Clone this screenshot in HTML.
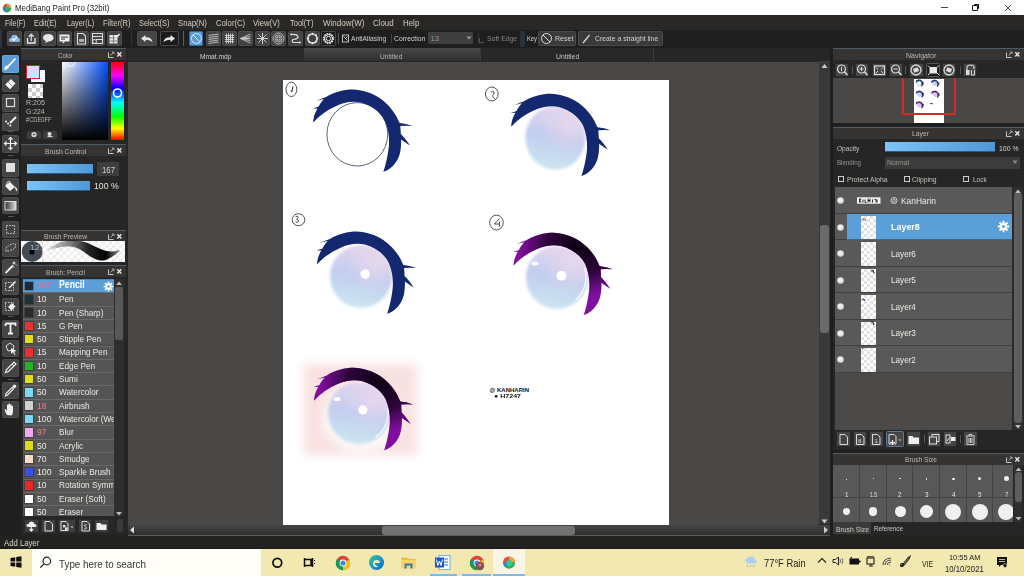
<!DOCTYPE html>
<html><head><meta charset="utf-8"><style>
*{margin:0;padding:0;box-sizing:border-box}
html,body{width:1024px;height:576px;overflow:hidden;background:#262626;font-family:"Liberation Sans",sans-serif;position:relative}
.a{position:absolute}
.t{position:absolute;white-space:nowrap;line-height:1;transform-origin:0 0}

</style></head><body>
<div class="a" style="left:0px;top:0px;width:1024px;height:15px;background:#fff"></div>
<svg class="a" style="left:2px;top:3px;" width="10" height="10" viewBox="0 0 10 10"><circle cx="5" cy="5" r="4.2" fill="#e84a3a"/><path d="M5 0.8 A4.2 4.2 0 0 1 9.2 5 L5 5Z" fill="#f0a030"/><path d="M9.2 5 A4.2 4.2 0 0 1 3 8.7 L5 5Z" fill="#1faa5a"/><path d="M3 8.7 A4.2 4.2 0 0 1 0.8 5 L5 5Z" fill="#2a7ad0"/><circle cx="5.3" cy="5.2" r="2.2" fill="#2bb56a"/></svg>
<div class="t" style="left:14.7px;top:5.10px;font-size:8.2px;color:#222;font-weight:400;font-family:'Liberation Sans',sans-serif;transform:scaleX(0.959);">MediBang Paint Pro (32bit)</div>
<div class="a" style="left:941px;top:7px;width:7px;height:1px;background:#444"></div>
<div class="a" style="left:972px;top:5.2px;width:5.6px;height:5.6px;border:1.2px solid #111;border-radius:1px"></div>
<div class="a" style="left:973.6px;top:4px;width:5.4px;height:5.4px;border-top:1px solid #111;border-right:1px solid #111;border-radius:1px"></div>
<svg class="a" style="left:1003.5px;top:3.5px;" width="8" height="8" viewBox="0 0 8 8"><path d="M1 1L7 7M7 1L1 7" stroke="#333" stroke-width=".9"/></svg>
<div class="a" style="left:0px;top:15px;width:1024px;height:15px;background:#292826"></div>
<div class="t" style="left:4.7px;top:19.00px;font-size:9px;color:#d4cdc2;font-weight:400;font-family:'Liberation Sans',sans-serif;transform:scaleX(0.788);">File(F)</div>
<div class="t" style="left:34.4px;top:19.00px;font-size:9px;color:#d4cdc2;font-weight:400;font-family:'Liberation Sans',sans-serif;transform:scaleX(0.821);">Edit(E)</div>
<div class="t" style="left:66.6px;top:19.00px;font-size:9px;color:#d4cdc2;font-weight:400;font-family:'Liberation Sans',sans-serif;transform:scaleX(0.809);">Layer(L)</div>
<div class="t" style="left:102.5px;top:19.00px;font-size:9px;color:#d4cdc2;font-weight:400;font-family:'Liberation Sans',sans-serif;transform:scaleX(0.846);">Filter(R)</div>
<div class="t" style="left:138.6px;top:19.00px;font-size:9px;color:#d4cdc2;font-weight:400;font-family:'Liberation Sans',sans-serif;transform:scaleX(0.821);">Select(S)</div>
<div class="t" style="left:178.4px;top:19.00px;font-size:9px;color:#d4cdc2;font-weight:400;font-family:'Liberation Sans',sans-serif;transform:scaleX(0.862);">Snap(N)</div>
<div class="t" style="left:215.6px;top:19.00px;font-size:9px;color:#d4cdc2;font-weight:400;font-family:'Liberation Sans',sans-serif;transform:scaleX(0.858);">Color(C)</div>
<div class="t" style="left:253.4px;top:19.00px;font-size:9px;color:#d4cdc2;font-weight:400;font-family:'Liberation Sans',sans-serif;transform:scaleX(0.858);">View(V)</div>
<div class="t" style="left:290.2px;top:19.00px;font-size:9px;color:#d4cdc2;font-weight:400;font-family:'Liberation Sans',sans-serif;transform:scaleX(0.835);">Tool(T)</div>
<div class="t" style="left:323px;top:19.00px;font-size:9px;color:#d4cdc2;font-weight:400;font-family:'Liberation Sans',sans-serif;transform:scaleX(0.890);">Window(W)</div>
<div class="t" style="left:373.4px;top:19.00px;font-size:9px;color:#d4cdc2;font-weight:400;font-family:'Liberation Sans',sans-serif;transform:scaleX(0.876);">Cloud</div>
<div class="t" style="left:402.7px;top:19.00px;font-size:9px;color:#d4cdc2;font-weight:400;font-family:'Liberation Sans',sans-serif;transform:scaleX(0.880);">Help</div>
<div class="a" style="left:0px;top:30px;width:1024px;height:18px;background:#1e1e1e"></div>
<div class="a" style="left:0px;top:30px;width:2px;height:18px;background:#2a3440"></div>
<div class="a" style="left:7px;top:31px;width:15px;height:15px;background:#434343;border:1px solid #4e4e4e;border-radius:1.5px"></div>
<svg class="a" style="left:7px;top:31px;" width="15" height="15" viewBox="0 0 15 15"><path d="M3.5 11 Q1.5 11 1.8 8.6 Q2.2 6.8 4 6.9 Q4.6 3.6 7.6 3.8 Q10.4 4 10.8 6.8 Q13.2 6.9 13.2 9 Q13.2 11 11 11Z" fill="#8bb6de"/><path d="M5 7.8L6.8 9.4L10 6" stroke="#f4f8ff" stroke-width="1.3" fill="none"/></svg>
<div class="a" style="left:24px;top:31px;width:15px;height:15px;background:#434343;border:1px solid #4e4e4e;border-radius:1.5px"></div>
<svg class="a" style="left:24px;top:31px;" width="15" height="15" viewBox="0 0 15 15"><path d="M3.5 7v5h7.5V7" stroke="#eee" stroke-width="1.3" fill="none"/><path d="M7.2 10V3.5M4.8 5.7L7.2 3.2L9.6 5.7" stroke="#ddd" stroke-width="1.3" fill="none"/></svg>
<div class="a" style="left:40.5px;top:31px;width:15px;height:15px;background:#434343;border:1px solid #4e4e4e;border-radius:1.5px"></div>
<svg class="a" style="left:40.5px;top:31px;" width="15" height="15" viewBox="0 0 15 15"><ellipse cx="7.3" cy="6.8" rx="5.3" ry="3.8" fill="#e6e6e6"/><path d="M5 9.5L4.3 12.5L7.5 10" fill="#e6e6e6"/></svg>
<div class="a" style="left:57px;top:31px;width:15px;height:15px;background:#434343;border:1px solid #4e4e4e;border-radius:1.5px"></div>
<svg class="a" style="left:57px;top:31px;" width="15" height="15" viewBox="0 0 15 15"><rect x="2.5" y="3.5" width="10" height="7" fill="#eee"/><path d="M5 10.5L6.5 12.5L8 10.5" fill="#eee"/><rect x="4" y="5.5" width="7" height="1.2" fill="#555"/><rect x="4" y="7.5" width="4" height="1.2" fill="#555"/></svg>
<div class="a" style="left:73.5px;top:31px;width:15px;height:15px;background:#434343;border:1px solid #4e4e4e;border-radius:1.5px"></div>
<svg class="a" style="left:73.5px;top:31px;" width="15" height="15" viewBox="0 0 15 15"><path d="M3.5 2.5h5.5l2.5 2.5v8h-8z" fill="none" stroke="#ddd" stroke-width="1.1"/><rect x="5" y="8" width="5" height="3" fill="#aaa"/></svg>
<div class="a" style="left:90px;top:31px;width:15px;height:15px;background:#434343;border:1px solid #4e4e4e;border-radius:1.5px"></div>
<svg class="a" style="left:90px;top:31px;" width="15" height="15" viewBox="0 0 15 15"><rect x="2.5" y="2.5" width="10" height="10" fill="none" stroke="#ddd" stroke-width="1"/><path d="M3 5.5h9M6 8.5h6" stroke="#ddd" stroke-width="1"/><circle cx="4.5" cy="10.5" r="2" fill="none" stroke="#ddd"/></svg>
<div class="a" style="left:106.5px;top:31px;width:15px;height:15px;background:#434343;border:1px solid #4e4e4e;border-radius:1.5px"></div>
<svg class="a" style="left:106.5px;top:31px;" width="15" height="15" viewBox="0 0 15 15"><rect x="2.5" y="4" width="8" height="8.5" fill="#e8e8e8"/><path d="M2.5 7h8M2.5 10h8M6.5 4v8.5" stroke="#666" stroke-width=".8"/><path d="M8 8L12.5 3" stroke="#eee" stroke-width="1.5"/></svg>
<div class="a" style="left:131px;top:31px;width:1px;height:15px;background:#333"></div>
<div class="a" style="left:137.4px;top:31px;width:19.6px;height:15px;background:#454545;border:1px solid #4e4e4e;border-radius:1.5px"></div>
<svg class="a" style="left:137.4px;top:31px;" width="20" height="15" viewBox="0 0 20 15"><path d="M4 7.5L8.5 4v2.2Q15 6 15.5 11.5Q13.5 8.8 8.5 8.8V11z" fill="#e8e8e8"/></svg>
<div class="a" style="left:159.7px;top:31px;width:19px;height:15px;background:#1c1c1c;border:1px solid #4a4a4a;border-radius:1.5px"></div>
<svg class="a" style="left:159.7px;top:31px;" width="19" height="15" viewBox="0 0 19 15"><path d="M15 7.5L10.5 4v2.2Q4 6 3.5 11.5Q5.5 8.8 10.5 8.8V11z" fill="#e8e8e8"/></svg>
<div class="a" style="left:183px;top:31px;width:1px;height:15px;background:#56606a"></div>
<div class="a" style="left:188.6px;top:31px;width:14.8px;height:15px;background:#5a9ad6;border:1px solid #3a6a9a;border-radius:1.5px"></div>
<svg class="a" style="left:188.6px;top:31px;" width="15" height="15" viewBox="0 0 15 15"><circle cx="7.4" cy="7.5" r="5" fill="none" stroke="#d8ecff" stroke-width="1"/><path d="M4 4L11 11" stroke="#d8ecff" stroke-width="1"/></svg>
<div class="a" style="left:205.8px;top:31px;width:15px;height:15px;background:#434343;border:1px solid #4e4e4e;border-radius:1.5px"></div>
<svg class="a" style="left:205.8px;top:31px;" width="15" height="15" viewBox="0 0 15 15"><path d="M2.5 4.5L12.5 3M2.5 6.5L12.5 5M2.5 8.5L12.5 7M2.5 10.5L12.5 9M2.5 12.5L12.5 11" stroke="#ccc" stroke-width=".9"/></svg>
<div class="a" style="left:222px;top:31px;width:15px;height:15px;background:#434343;border:1px solid #4e4e4e;border-radius:1.5px"></div>
<svg class="a" style="left:222px;top:31px;" width="15" height="15" viewBox="0 0 15 15"><path d="M4.5 2.5v10M6.5 2.5v10M8.5 2.5v10M10.5 2.5v10M3 4.5h9M3 6.5h9M3 8.5h9M3 10.5h9" stroke="#e4e4e4" stroke-width=".8"/></svg>
<div class="a" style="left:238px;top:31px;width:15px;height:15px;background:#434343;border:1px solid #4e4e4e;border-radius:1.5px"></div>
<svg class="a" style="left:238px;top:31px;" width="15" height="15" viewBox="0 0 15 15"><path d="M2.5 7.5L12.5 3M2.5 7.5L12.5 5.5M2.5 7.5L12.5 7.5M2.5 7.5L12.5 9.5M2.5 7.5L12.5 12" stroke="#ccc" stroke-width=".9"/></svg>
<div class="a" style="left:255px;top:31px;width:15px;height:15px;background:#434343;border:1px solid #4e4e4e;border-radius:1.5px"></div>
<svg class="a" style="left:255px;top:31px;" width="15" height="15" viewBox="0 0 15 15"><path d="M7.5 2v11M2 7.5h11M3.5 3.5l8 8M11.5 3.5l-8 8" stroke="#ddd" stroke-width=".9"/></svg>
<div class="a" style="left:271.4px;top:31px;width:15px;height:15px;background:#434343;border:1px solid #4e4e4e;border-radius:1.5px"></div>
<svg class="a" style="left:271.4px;top:31px;" width="15" height="15" viewBox="0 0 15 15"><circle cx="7.5" cy="7.5" r="5.5" fill="none" stroke="#ccc" stroke-width=".9"/><circle cx="7.5" cy="7.5" r="3.5" fill="none" stroke="#ccc" stroke-width=".9"/><rect x="6" y="6" width="3" height="3" fill="none" stroke="#ccc" stroke-width=".9"/></svg>
<div class="a" style="left:287.8px;top:31px;width:15px;height:15px;background:#434343;border:1px solid #4e4e4e;border-radius:1.5px"></div>
<svg class="a" style="left:287.8px;top:31px;" width="15" height="15" viewBox="0 0 15 15"><path d="M3.5 3.5Q9 3 10 5.5Q10.5 8 5 8.5Q3.5 9.5 5 11.5L11.5 11.5" stroke="#ddd" stroke-width="1.2" fill="none"/><circle cx="3.2" cy="3.5" r="1.1" fill="#ddd"/><circle cx="11.8" cy="11.5" r="1.1" fill="#ddd"/></svg>
<div class="a" style="left:304.5px;top:31px;width:15px;height:15px;background:#434343;border:1px solid #4e4e4e;border-radius:1.5px"></div>
<svg class="a" style="left:304.5px;top:31px;" width="15" height="15" viewBox="0 0 15 15"><circle cx="7.5" cy="7.5" r="4.6" fill="none" stroke="#eee" stroke-width="1.4"/><circle cx="12.10" cy="7.50" r="1.1" fill="#eee"/><circle cx="10.75" cy="10.75" r="1.1" fill="#eee"/><circle cx="7.50" cy="12.10" r="1.1" fill="#eee"/><circle cx="4.25" cy="10.75" r="1.1" fill="#eee"/><circle cx="2.90" cy="7.50" r="1.1" fill="#eee"/><circle cx="4.25" cy="4.25" r="1.1" fill="#eee"/><circle cx="7.50" cy="2.90" r="1.1" fill="#eee"/><circle cx="10.75" cy="4.25" r="1.1" fill="#eee"/></svg>
<div class="a" style="left:321.4px;top:31px;width:14.5px;height:15px;background:#1c1c1c;border:1px solid #4a4a4a;border-radius:1.5px"></div>
<svg class="a" style="left:321.4px;top:31px;" width="15" height="15" viewBox="0 0 15 15"><circle cx="7.5" cy="7.5" r="4.6" fill="none" stroke="#e0e0e0" stroke-width="2" stroke-dasharray="1.6 .8"/><circle cx="7.5" cy="7.5" r="4" fill="none" stroke="#e0e0e0" stroke-width=".9"/><circle cx="7.5" cy="7.5" r="2.2" fill="none" stroke="#e0e0e0" stroke-width="1"/></svg>
<div class="a" style="left:338.4px;top:33px;width:1px;height:11px;background:#555"></div>
<svg class="a" style="left:341.5px;top:34px;" width="7" height="9" viewBox="0 0 7 9"><rect x=".5" y="1" width="6" height="7" fill="none" stroke="#ccc" stroke-width=".9"/><path d="M1.5 2.5L5.5 6.5M5.5 2.5L3 5" stroke="#ccc" stroke-width=".9"/></svg>
<div class="t" style="left:351.1px;top:35.20px;font-size:8px;color:#d6d2ca;font-weight:400;font-family:'Liberation Sans',sans-serif;transform:scaleX(0.842);">AntiAliasing</div>
<div class="a" style="left:390.5px;top:34px;width:1px;height:9px;background:#444"></div>
<div class="t" style="left:394.1px;top:35.20px;font-size:8px;color:#d6d2ca;font-weight:400;font-family:'Liberation Sans',sans-serif;transform:scaleX(0.848);">Correction</div>
<div class="a" style="left:428px;top:32px;width:44.8px;height:12.4px;background:#3f3f3f;border-radius:1px"></div>
<div class="t" style="left:430.5px;top:35.00px;font-size:7.5px;color:#999;font-weight:400;font-family:'Liberation Sans',sans-serif;">13</div>
<svg class="a" style="left:466px;top:36px;" width="6" height="4" viewBox="0 0 6 4"><path d="M0.5 0.5h5L3 3.5z" fill="#999"/></svg>
<div class="a" style="left:477.5px;top:33px;width:1px;height:11px;background:#3a3a3a"></div>
<div class="a" style="left:479px;top:38px;width:5px;height:5px;border-left:1px solid #555;border-bottom:1px solid #555"></div>
<div class="t" style="left:487px;top:35.20px;font-size:8px;color:#8a8783;font-weight:400;font-family:'Liberation Sans',sans-serif;transform:scaleX(0.859);">Soft Edge</div>
<div class="a" style="left:520px;top:31px;width:5px;height:16px;background:#28323c"></div>
<div class="t" style="left:527px;top:35.20px;font-size:8px;color:#d6d2ca;font-weight:400;font-family:'Liberation Sans',sans-serif;transform:scaleX(0.725);">Key</div>
<div class="a" style="left:538.3px;top:31px;width:37.5px;height:15px;background:#3a3a3a;border:1px solid #4a4a4a;border-radius:1.5px"></div>
<svg class="a" style="left:540px;top:32px;" width="13" height="13" viewBox="0 0 13 13"><circle cx="6.5" cy="6.5" r="5" fill="none" stroke="#ddd" stroke-width="1"/><path d="M3 3L10 10" stroke="#ddd" stroke-width="1"/></svg>
<div class="t" style="left:554.5px;top:35.20px;font-size:8px;color:#d6d2ca;font-weight:400;font-family:'Liberation Sans',sans-serif;transform:scaleX(0.885);">Reset</div>
<div class="a" style="left:577.9px;top:31px;width:85.2px;height:15px;background:#3a3a3a;border:1px solid #4a4a4a;border-radius:1.5px"></div>
<svg class="a" style="left:580px;top:32px;" width="12" height="13" viewBox="0 0 12 13"><path d="M3 11L9.5 3" stroke="#ddd" stroke-width="1.2"/></svg>
<div class="t" style="left:594.6px;top:35.20px;font-size:8px;color:#d6d2ca;font-weight:400;font-family:'Liberation Sans',sans-serif;transform:scaleX(0.856);">Create a straight line</div>
<div class="a" style="left:0px;top:48px;width:21px;height:487px;background:#1f1f1f"></div>
<div class="a" style="left:2px;top:55.2px;width:17.4px;height:17.4px;background:#5b9bd5;border:1px solid #6aa6dc;border-radius:1.5px"></div>
<svg class="a" style="left:2px;top:55.2px;" width="17" height="17" viewBox="0 0 17 17"><path d="M5 12.5Q3.5 14.5 3.2 14Q4 11.5 5.5 11M6 11.5L13.5 3.5" stroke="#fff" stroke-width="1.8" fill="none"/><ellipse cx="4.6" cy="12.6" rx="2" ry="1.5" fill="#fff"/></svg>
<div class="a" style="left:2px;top:75px;width:17.4px;height:17.4px;background:#444;border:1px solid #4e4e4e;border-radius:1.5px"></div>
<svg class="a" style="left:2px;top:75px;" width="17" height="17" viewBox="0 0 17 17"><path d="M3.5 9.5L9 4L13.5 8.5L8 14z" fill="#f0f0f0"/><path d="M3.5 9.5L6 7L10.5 11.5L8 14z" fill="#fff"/><path d="M6 7L10.5 11.5" stroke="#555" stroke-width=".7"/></svg>
<div class="a" style="left:2px;top:94.2px;width:17.4px;height:17.4px;background:#444;border:1px solid #4e4e4e;border-radius:1.5px"></div>
<svg class="a" style="left:2px;top:94.2px;" width="17" height="17" viewBox="0 0 17 17"><rect x="4.5" y="4.5" width="8" height="8" fill="none" stroke="#ddd" stroke-width="1.2"/></svg>
<div class="a" style="left:2px;top:113.4px;width:17.4px;height:17.4px;background:#444;border:1px solid #4e4e4e;border-radius:1.5px"></div>
<svg class="a" style="left:2px;top:113.4px;" width="17" height="17" viewBox="0 0 17 17"><path d="M8 10L14 4" stroke="#eee" stroke-width="2"/><circle cx="4" cy="8.5" r="1" fill="#eee"/><circle cx="6" cy="10.5" r="1" fill="#eee"/><circle cx="8.3" cy="12.5" r="1" fill="#eee"/></svg>
<div class="a" style="left:8px;top:131px;width:6px;height:1px;background:#555"></div>
<div class="a" style="left:2px;top:135.2px;width:17.4px;height:17.4px;background:#444;border:1px solid #4e4e4e;border-radius:1.5px"></div>
<svg class="a" style="left:2px;top:135.2px;" width="17" height="17" viewBox="0 0 17 17"><path d="M8.5 2.5v12M2.5 8.5h12" stroke="#eee" stroke-width="1.2"/><path d="M6.5 4.5L8.5 2.5L10.5 4.5M6.5 12.5L8.5 14.5L10.5 12.5M4.5 6.5L2.5 8.5L4.5 10.5M12.5 6.5L14.5 8.5L12.5 10.5" stroke="#eee" stroke-width="1.2" fill="none"/></svg>
<div class="a" style="left:8px;top:155px;width:6px;height:1px;background:#555"></div>
<div class="a" style="left:2px;top:159.2px;width:17.4px;height:17.4px;background:#444;border:1px solid #4e4e4e;border-radius:1.5px"></div>
<svg class="a" style="left:2px;top:159.2px;" width="17" height="17" viewBox="0 0 17 17"><rect x="4" y="4" width="9" height="9" fill="#e0e0e0"/></svg>
<div class="a" style="left:2px;top:177.9px;width:17.4px;height:17.4px;background:#444;border:1px solid #4e4e4e;border-radius:1.5px"></div>
<svg class="a" style="left:2px;top:177.9px;" width="17" height="17" viewBox="0 0 17 17"><path d="M3 8L8 4L13 9L8 13z" fill="#f0f0f0"/><path d="M4 7.5Q5 2.5 8 3.5" stroke="#ddd" fill="none"/><path d="M13 9Q15 11 14.5 13" stroke="#ddd" stroke-width="1.5" fill="none"/></svg>
<svg class="a" style="left:2px;top:196.7px" width="17" height="17"><defs><linearGradient id="tg" x1="0" x2="1"><stop offset="0" stop-color="#333"/><stop offset="1" stop-color="#ddd"/></linearGradient></defs></svg>
<div class="a" style="left:2px;top:196.7px;width:17.4px;height:17.4px;background:#444;border:1px solid #4e4e4e;border-radius:1.5px"></div>
<svg class="a" style="left:2px;top:196.7px;" width="17" height="17" viewBox="0 0 17 17"><rect x="3" y="4.5" width="11" height="8.5" fill="url(#tg)" stroke="#ddd" stroke-width="1"/></svg>
<div class="a" style="left:8px;top:216px;width:6px;height:1px;background:#555"></div>
<div class="a" style="left:2px;top:220.6px;width:17.4px;height:17.4px;background:#444;border:1px solid #4e4e4e;border-radius:1.5px"></div>
<svg class="a" style="left:2px;top:220.6px;" width="17" height="17" viewBox="0 0 17 17"><rect x="4.5" y="4.5" width="8" height="8" fill="none" stroke="#ccc" stroke-width="1.1" stroke-dasharray="1.5 1.2"/></svg>
<div class="a" style="left:2px;top:239.4px;width:17.4px;height:17.4px;background:#444;border:1px solid #4e4e4e;border-radius:1.5px"></div>
<svg class="a" style="left:2px;top:239.4px;" width="17" height="17" viewBox="0 0 17 17"><path d="M4 12Q3 8 8 6Q13 3 13.5 6Q14 10 8 11.5Q5 12.5 4 12z" fill="none" stroke="#ccc" stroke-width="1.1" stroke-dasharray="1.4 1.2"/></svg>
<div class="a" style="left:2px;top:258.75px;width:17.4px;height:17.4px;background:#444;border:1px solid #4e4e4e;border-radius:1.5px"></div>
<svg class="a" style="left:2px;top:258.75px;" width="17" height="17" viewBox="0 0 17 17"><path d="M3.5 14L11 6.5" stroke="#eee" stroke-width="1.8"/><path d="M12 2.5v3M10.5 4h3M14 5.5l1 1M12 7.5v1" stroke="#eee" stroke-width="1"/></svg>
<div class="a" style="left:2px;top:278px;width:17.4px;height:17.4px;background:#444;border:1px solid #4e4e4e;border-radius:1.5px"></div>
<svg class="a" style="left:2px;top:278px;" width="17" height="17" viewBox="0 0 17 17"><rect x="3.5" y="4.5" width="8" height="8" fill="none" stroke="#ccc" stroke-width="1" stroke-dasharray="1.4 1.1"/><path d="M7 10L13.5 3.5" stroke="#eee" stroke-width="1.6"/></svg>
<div class="a" style="left:2px;top:297.5px;width:17.4px;height:17.4px;background:#444;border:1px solid #4e4e4e;border-radius:1.5px"></div>
<svg class="a" style="left:2px;top:297.5px;" width="17" height="17" viewBox="0 0 17 17"><rect x="3.5" y="4.5" width="8" height="8" fill="none" stroke="#ccc" stroke-width="1" stroke-dasharray="1.4 1.1"/><path d="M6 9L10 5L13.5 8.5L9.5 12.5z" fill="#eee"/></svg>
<div class="a" style="left:8px;top:316px;width:6px;height:1px;background:#555"></div>
<div class="a" style="left:2px;top:320.3px;width:17.4px;height:17.4px;background:#444;border:1px solid #4e4e4e;border-radius:1.5px"></div>
<svg class="a" style="left:2px;top:320.3px;" width="17" height="17" viewBox="0 0 17 17"><path d="M3.5 3.5h10v2.5M3.5 3.5v2.5M8.5 3.5v10M6 13.5h5" stroke="#f2f2f2" stroke-width="1.8" fill="none"/></svg>
<div class="a" style="left:2px;top:340px;width:17.4px;height:17.4px;background:#444;border:1px solid #4e4e4e;border-radius:1.5px"></div>
<svg class="a" style="left:2px;top:340px;" width="17" height="17" viewBox="0 0 17 17"><path d="M4 6L8 3L12 6L11 10L6 11z" fill="none" stroke="#ddd" stroke-width="1"/><path d="M9 8L14.5 11L12 11.8L13.5 14.5L12.5 15L11 12.3L9 14z" fill="#eee"/></svg>
<div class="a" style="left:2px;top:359.4px;width:17.4px;height:17.4px;background:#444;border:1px solid #4e4e4e;border-radius:1.5px"></div>
<svg class="a" style="left:2px;top:359.4px;" width="17" height="17" viewBox="0 0 17 17"><path d="M3.5 13.5L4.5 10.5L12 3L14 5L6.5 12.5z" fill="none" stroke="#eee" stroke-width="1.2"/><path d="M10 5L12 7" stroke="#eee"/></svg>
<div class="a" style="left:8px;top:378.5px;width:6px;height:1px;background:#555"></div>
<div class="a" style="left:2px;top:381.9px;width:17.4px;height:17.4px;background:#444;border:1px solid #4e4e4e;border-radius:1.5px"></div>
<svg class="a" style="left:2px;top:381.9px;" width="17" height="17" viewBox="0 0 17 17"><path d="M3.5 14L4 11.5L10 5.5L11.5 7L5.5 13z" fill="none" stroke="#eee" stroke-width="1.1"/><path d="M10 4.5L12 2.5Q14 2.5 14.5 4.5L12.5 6.5z" fill="#eee"/></svg>
<div class="a" style="left:2px;top:401px;width:17.4px;height:17.4px;background:#444;border:1px solid #4e4e4e;border-radius:1.5px"></div>
<svg class="a" style="left:2px;top:401px;" width="17" height="17" viewBox="0 0 17 17"><path d="M5 14Q3 11 2.5 8.5Q3 7.5 4 8.5L5 10V4Q5.5 3 6.5 4V8V2.8Q7.3 2 8 3V8V3.5Q8.8 2.8 9.5 3.7V8.5V5Q10.3 4.3 11 5.2V10Q11 13 9.5 14.5z" fill="#f0f0f0"/></svg>
<div class="a" style="left:21px;top:48px;width:105px;height:12px;background:#353433;border-top:1px solid #4e5c68"></div>
<div class="t" style="left:57.7px;top:51.50px;font-size:8px;color:#bdb8b0;font-weight:400;font-family:'Liberation Sans',sans-serif;transform:scaleX(0.763);">Color</div>
<svg class="a" style="left:107px;top:51px;" width="18" height="8" viewBox="0 0 18 8"><path d="M1.5 1.5v5h5" stroke="#c8c8c8" stroke-width="1" fill="none"/><path d="M3.5 4.5L6.5 1.5M4.8 1h2.2v2.2" stroke="#c8c8c8" stroke-width=".8" fill="none"/><path d="M10.3 1.2L14.3 5.6M14.3 1.2L10.3 5.6" stroke="#e0e0e0" stroke-width="1.5"/></svg>
<div class="a" style="left:21px;top:61px;width:105px;height:83px;background:#262626"></div>
<div class="a" style="left:31.2px;top:70px;width:13.8px;height:12.3px;background:#fff"></div>
<div class="a" style="left:26px;top:65px;width:13.9px;height:13.8px;background:#cde0ff;border:1.3px solid #e02020"></div>
<div class="a" style="left:27.7px;top:84px;width:15.3px;height:13.9px;background-color:#fff;background-image:linear-gradient(45deg,#ccc 25%,transparent 25%,transparent 75%,#ccc 75%),linear-gradient(45deg,#ccc 25%,transparent 25%,transparent 75%,#ccc 75%);background-size:8px 8px;background-position:0 0,4px 4px"></div>
<div class="t" style="left:25.7px;top:99.20px;font-size:7px;color:#bdb8b0;font-weight:400;font-family:'Liberation Sans',sans-serif;transform:scaleX(1.017);">R:205</div>
<div class="t" style="left:25.7px;top:107.50px;font-size:7px;color:#bdb8b0;font-weight:400;font-family:'Liberation Sans',sans-serif;transform:scaleX(0.970);">G:224</div>
<div class="t" style="left:25.7px;top:116.20px;font-size:7px;color:#bdb8b0;font-weight:400;font-family:'Liberation Sans',sans-serif;transform:scaleX(0.819);">#CDE0FF</div>
<div class="a" style="left:26.9px;top:130.8px;width:13.8px;height:7.8px;background:#3c3c3c;border-radius:1px"></div>
<div class="a" style="left:42.5px;top:130.8px;width:14.7px;height:7.8px;background:#3c3c3c;border-radius:1px"></div>
<svg class="a" style="left:30px;top:131px;" width="8" height="7" viewBox="0 0 8 7"><circle cx="4" cy="3.5" r="2.6" fill="#ddd"/><path d="M2.5 3.5h3M4 2v3" stroke="#555" stroke-width=".7"/></svg>
<svg class="a" style="left:46px;top:131px;" width="8" height="7" viewBox="0 0 8 7"><circle cx="3.5" cy="3" r="2" fill="#ddd"/><path d="M1.5 5.5h5" stroke="#ddd" stroke-width="1.2"/></svg>
<div class="a" style="left:61.9px;top:61.8px;width:46px;height:78.2px;background:linear-gradient(to bottom,rgba(0,0,0,0),#000),linear-gradient(to right,#fff,#0050ff)"></div>
<svg class="a" style="left:61.9px;top:61.8px;" width="20" height="8" viewBox="0 0 20 8"><circle cx="9" cy="0.8" r="3.6" fill="none" stroke="#eee" stroke-width="1.2"/></svg>
<div class="a" style="left:110.7px;top:61.8px;width:13.6px;height:78.2px;background:linear-gradient(to bottom,#ff0000 0%,#ff00ff 17%,#0000ff 34%,#00ffff 52%,#00ff00 70%,#ffff00 85%,#ff0000 100%)"></div>
<svg class="a" style="left:111px;top:87px;" width="13" height="12" viewBox="0 0 13 12"><circle cx="6.5" cy="6" r="4" fill="none" stroke="#fff" stroke-width="1.6"/></svg>
<div class="a" style="left:21px;top:144px;width:105px;height:12px;background:#353433;border-top:1px solid #4e5c68"></div>
<div class="t" style="left:44.8px;top:147.50px;font-size:8px;color:#bdb8b0;font-weight:400;font-family:'Liberation Sans',sans-serif;transform:scaleX(0.846);">Brush Control</div>
<svg class="a" style="left:107px;top:147px;" width="18" height="8" viewBox="0 0 18 8"><path d="M1.5 1.5v5h5" stroke="#c8c8c8" stroke-width="1" fill="none"/><path d="M3.5 4.5L6.5 1.5M4.8 1h2.2v2.2" stroke="#c8c8c8" stroke-width=".8" fill="none"/><path d="M10.3 1.2L14.3 5.6M14.3 1.2L10.3 5.6" stroke="#e0e0e0" stroke-width="1.5"/></svg>
<div class="a" style="left:21px;top:156.5px;width:105px;height:73px;background:#262626"></div>
<div class="a" style="left:27.3px;top:163.8px;width:65.4px;height:10.2px;background:linear-gradient(to right,#7cc4f6,#4d98d8);border-bottom:1px solid #2a5a88"></div>
<div class="a" style="left:97px;top:162.2px;width:22px;height:14px;background:#3e3e3e"></div>
<div class="t" style="left:102px;top:165.50px;font-size:9px;color:#d8d4cc;font-weight:400;font-family:'Liberation Sans',sans-serif;transform:scaleX(0.865);">167</div>
<div class="a" style="left:27.3px;top:180.5px;width:62.7px;height:10.5px;background:linear-gradient(to right,#7cc4f6,#4d98d8);border-bottom:1px solid #2a5a88"></div>
<div class="t" style="left:94.3px;top:181.70px;font-size:9px;color:#e8e4dc;font-weight:400;font-family:'Liberation Sans',sans-serif;transform:scaleX(0.967);">100 %</div>
<div class="a" style="left:21px;top:229.7px;width:105px;height:12px;background:#353433;border-top:1px solid #4e5c68"></div>
<div class="t" style="left:43.6px;top:233.20px;font-size:8px;color:#bdb8b0;font-weight:400;font-family:'Liberation Sans',sans-serif;transform:scaleX(0.834);">Brush Preview</div>
<svg class="a" style="left:107px;top:232.7px;" width="18" height="8" viewBox="0 0 18 8"><path d="M1.5 1.5v5h5" stroke="#c8c8c8" stroke-width="1" fill="none"/><path d="M3.5 4.5L6.5 1.5M4.8 1h2.2v2.2" stroke="#c8c8c8" stroke-width=".8" fill="none"/><path d="M10.3 1.2L14.3 5.6M14.3 1.2L10.3 5.6" stroke="#e0e0e0" stroke-width="1.5"/></svg>
<div class="a" style="left:21.4px;top:240.8px;width:103.5px;height:21.2px;background-color:#fff;background-image:linear-gradient(45deg,#ececec 25%,transparent 25%,transparent 75%,#ececec 75%),linear-gradient(45deg,#ececec 25%,transparent 25%,transparent 75%,#ececec 75%);background-size:7px 7px;background-position:0 0,3.5px 3.5px"></div>
<svg class="a" style="left:21px;top:240px;" width="104" height="22" viewBox="0 0 104 22"><defs><linearGradient id="bp" gradientUnits="userSpaceOnUse" x1="25" y1="0" x2="100" y2="0"><stop offset="0" stop-color="#000" stop-opacity=".12"/><stop offset=".3" stop-color="#000" stop-opacity=".45"/><stop offset=".55" stop-color="#000" stop-opacity=".85"/><stop offset=".8" stop-color="#000" stop-opacity="1"/><stop offset="1" stop-color="#000" stop-opacity=".35"/></linearGradient></defs><path d="M25.9 10.5 C31 6 37 2 45 1 C53 0 61 .5 69 4 C77 8 85 12 92 11.5 C96 11 98 10 99.5 10 C97 13 91 18 83 20.5 C75 21 69 16.5 63 12 C57 7.5 51 6 45 6.5 C37 7 31 9 25.9 10.5 Z" fill="url(#bp)"/></svg>
<svg class="a" style="left:21px;top:240px;" width="24" height="23" viewBox="0 0 24 23"><circle cx="11.2" cy="11.5" r="10.4" fill="#444a52"/><circle cx="10.9" cy="12" r="2.6" fill="#000"/><path d="M21.5 0v22" stroke="#ccc" stroke-width=".6"/></svg>
<div class="t" style="left:29.8px;top:244.50px;font-size:6.5px;color:#a8b8c8;font-weight:400;font-family:'Liberation Sans',sans-serif;transform:scaleX(1.326);">12.</div>
<div class="a" style="left:21px;top:265px;width:105px;height:12px;background:#353433;border-top:1px solid #4e5c68"></div>
<div class="t" style="left:45.7px;top:268.50px;font-size:8px;color:#bdb8b0;font-weight:400;font-family:'Liberation Sans',sans-serif;transform:scaleX(0.825);">Brush: Pencil</div>
<svg class="a" style="left:107px;top:268px;" width="18" height="8" viewBox="0 0 18 8"><path d="M1.5 1.5v5h5" stroke="#c8c8c8" stroke-width="1" fill="none"/><path d="M3.5 4.5L6.5 1.5M4.8 1h2.2v2.2" stroke="#c8c8c8" stroke-width=".8" fill="none"/><path d="M10.3 1.2L14.3 5.6M14.3 1.2L10.3 5.6" stroke="#e0e0e0" stroke-width="1.5"/></svg>
<div class="a" style="left:21px;top:277px;width:105px;height:258px;background:#262626"></div>
<div class="a" style="left:22.5px;top:279px;width:91.2px;height:237.3px;background:#4a4a4a"></div>
<div class="a" style="left:22.5px;top:279px;width:91.2px;height:237.3px;overflow:hidden">
<div class="a" style="left:0;top:0.00px;width:91.2px;height:13.3px;background:#5a9fd8;border-top:1px solid #4a8ac0"></div>
<div class="a" style="left:2.2px;top:2.70px;width:8.5px;height:8.6px;background:#1d2a3a;box-shadow:0 0 0 .6px rgba(0,0,0,.35)"></div>

<div class="a" style="left:0;top:13.30px;width:91.2px;height:13.3px;background:#555;border-top:1px solid #6a6a6a"></div>
<div class="a" style="left:2.2px;top:16.00px;width:8.5px;height:8.6px;background:#22303a;box-shadow:0 0 0 .6px rgba(0,0,0,.35)"></div>

<div class="a" style="left:0;top:26.60px;width:91.2px;height:13.3px;background:#555;border-top:1px solid #6a6a6a"></div>
<div class="a" style="left:2.2px;top:29.30px;width:8.5px;height:8.6px;background:#2a2a2a;box-shadow:0 0 0 .6px rgba(0,0,0,.35)"></div>

<div class="a" style="left:0;top:39.90px;width:91.2px;height:13.3px;background:#555;border-top:1px solid #6a6a6a"></div>
<div class="a" style="left:2.2px;top:42.60px;width:8.5px;height:8.6px;background:#e83232;box-shadow:0 0 0 .6px rgba(0,0,0,.35)"></div>

<div class="a" style="left:0;top:53.20px;width:91.2px;height:13.3px;background:#555;border-top:1px solid #6a6a6a"></div>
<div class="a" style="left:2.2px;top:55.90px;width:8.5px;height:8.6px;background:#e6dc1e;box-shadow:0 0 0 .6px rgba(0,0,0,.35)"></div>

<div class="a" style="left:0;top:66.50px;width:91.2px;height:13.3px;background:#555;border-top:1px solid #6a6a6a"></div>
<div class="a" style="left:2.2px;top:69.20px;width:8.5px;height:8.6px;background:#e83232;box-shadow:0 0 0 .6px rgba(0,0,0,.35)"></div>

<div class="a" style="left:0;top:79.80px;width:91.2px;height:13.3px;background:#555;border-top:1px solid #6a6a6a"></div>
<div class="a" style="left:2.2px;top:82.50px;width:8.5px;height:8.6px;background:#22b422;box-shadow:0 0 0 .6px rgba(0,0,0,.35)"></div>

<div class="a" style="left:0;top:93.10px;width:91.2px;height:13.3px;background:#555;border-top:1px solid #6a6a6a"></div>
<div class="a" style="left:2.2px;top:95.80px;width:8.5px;height:8.6px;background:#e6dc1e;box-shadow:0 0 0 .6px rgba(0,0,0,.35)"></div>

<div class="a" style="left:0;top:106.40px;width:91.2px;height:13.3px;background:#555;border-top:1px solid #6a6a6a"></div>
<div class="a" style="left:2.2px;top:109.10px;width:8.5px;height:8.6px;background:#7ad8f8;box-shadow:0 0 0 .6px rgba(0,0,0,.35)"></div>

<div class="a" style="left:0;top:119.70px;width:91.2px;height:13.3px;background:#555;border-top:1px solid #6a6a6a"></div>
<div class="a" style="left:2.2px;top:122.40px;width:8.5px;height:8.6px;background:#cfcfcf;box-shadow:0 0 0 .6px rgba(0,0,0,.35)"></div>

<div class="a" style="left:0;top:133.00px;width:91.2px;height:13.3px;background:#555;border-top:1px solid #6a6a6a"></div>
<div class="a" style="left:2.2px;top:135.70px;width:8.5px;height:8.6px;background:#7ad8f8;box-shadow:0 0 0 .6px rgba(0,0,0,.35)"></div>

<div class="a" style="left:0;top:146.30px;width:91.2px;height:13.3px;background:#555;border-top:1px solid #6a6a6a"></div>
<div class="a" style="left:2.2px;top:149.00px;width:8.5px;height:8.6px;background:#f4a6f4;box-shadow:0 0 0 .6px rgba(0,0,0,.35)"></div>

<div class="a" style="left:0;top:159.60px;width:91.2px;height:13.3px;background:#555;border-top:1px solid #6a6a6a"></div>
<div class="a" style="left:2.2px;top:162.30px;width:8.5px;height:8.6px;background:#e0d81a;box-shadow:0 0 0 .6px rgba(0,0,0,.35)"></div>

<div class="a" style="left:0;top:172.90px;width:91.2px;height:13.3px;background:#555;border-top:1px solid #6a6a6a"></div>
<div class="a" style="left:2.2px;top:175.60px;width:8.5px;height:8.6px;background:#f8dcc4;box-shadow:0 0 0 .6px rgba(0,0,0,.35)"></div>

<div class="a" style="left:0;top:186.20px;width:91.2px;height:13.3px;background:#555;border-top:1px solid #6a6a6a"></div>
<div class="a" style="left:2.2px;top:188.90px;width:8.5px;height:8.6px;background:#3a4ef2;box-shadow:0 0 0 .6px rgba(0,0,0,.35)"></div>

<div class="a" style="left:0;top:199.50px;width:91.2px;height:13.3px;background:#555;border-top:1px solid #6a6a6a"></div>
<div class="a" style="left:2.2px;top:202.20px;width:8.5px;height:8.6px;background:#e82828;box-shadow:0 0 0 .6px rgba(0,0,0,.35)"></div>

<div class="a" style="left:0;top:212.80px;width:91.2px;height:13.3px;background:#555;border-top:1px solid #6a6a6a"></div>
<div class="a" style="left:2.2px;top:215.50px;width:8.5px;height:8.6px;background:#ffffff;box-shadow:0 0 0 .6px rgba(0,0,0,.35)"></div>

<div class="a" style="left:0;top:226.10px;width:91.2px;height:13.3px;background:#555;border-top:1px solid #6a6a6a"></div>
<div class="a" style="left:2.2px;top:228.80px;width:8.5px;height:8.6px;background:#ffffff;box-shadow:0 0 0 .6px rgba(0,0,0,.35)"></div>

</div>
<div class="a" style="left:0;top:0;width:113.7px;height:516.3px;overflow:hidden">
<div class="t" style="left:36.6px;top:279.90px;font-size:9.8px;color:#e86a98;font-weight:700;font-family:'Liberation Sans',sans-serif;transform:scaleX(0.886);">167</div>
<div class="t" style="left:58.6px;top:279.90px;font-size:10px;color:#fff;font-weight:700;font-family:'Liberation Sans',sans-serif;transform:scaleX(0.869);">Pencil</div>
<div class="t" style="left:36.6px;top:294.20px;font-size:9.8px;color:#f0ece4;font-weight:400;font-family:'Liberation Sans',sans-serif;transform:scaleX(0.871);">10</div>
<div class="t" style="left:58.5px;top:294.20px;font-size:9.8px;color:#ecE8e0;font-weight:400;font-family:'Liberation Sans',sans-serif;transform:scaleX(.84)">Pen</div>
<div class="t" style="left:36.6px;top:307.50px;font-size:9.8px;color:#f0ece4;font-weight:400;font-family:'Liberation Sans',sans-serif;transform:scaleX(0.871);">10</div>
<div class="t" style="left:58.5px;top:307.50px;font-size:9.8px;color:#ecE8e0;font-weight:400;font-family:'Liberation Sans',sans-serif;transform:scaleX(.84)">Pen (Sharp)</div>
<div class="t" style="left:36.6px;top:320.80px;font-size:9.8px;color:#f0ece4;font-weight:400;font-family:'Liberation Sans',sans-serif;transform:scaleX(0.871);">15</div>
<div class="t" style="left:58.5px;top:320.80px;font-size:9.8px;color:#ecE8e0;font-weight:400;font-family:'Liberation Sans',sans-serif;transform:scaleX(.84)">G Pen</div>
<div class="t" style="left:36.6px;top:334.10px;font-size:9.8px;color:#f0ece4;font-weight:400;font-family:'Liberation Sans',sans-serif;transform:scaleX(0.871);">50</div>
<div class="t" style="left:58.5px;top:334.10px;font-size:9.8px;color:#ecE8e0;font-weight:400;font-family:'Liberation Sans',sans-serif;transform:scaleX(.84)">Stipple Pen</div>
<div class="t" style="left:36.6px;top:347.40px;font-size:9.8px;color:#f0ece4;font-weight:400;font-family:'Liberation Sans',sans-serif;transform:scaleX(0.871);">15</div>
<div class="t" style="left:58.5px;top:347.40px;font-size:9.8px;color:#ecE8e0;font-weight:400;font-family:'Liberation Sans',sans-serif;transform:scaleX(.84)">Mapping Pen</div>
<div class="t" style="left:36.6px;top:360.70px;font-size:9.8px;color:#f0ece4;font-weight:400;font-family:'Liberation Sans',sans-serif;transform:scaleX(0.871);">10</div>
<div class="t" style="left:58.5px;top:360.70px;font-size:9.8px;color:#ecE8e0;font-weight:400;font-family:'Liberation Sans',sans-serif;transform:scaleX(.84)">Edge Pen</div>
<div class="t" style="left:36.6px;top:374.00px;font-size:9.8px;color:#f0ece4;font-weight:400;font-family:'Liberation Sans',sans-serif;transform:scaleX(0.871);">50</div>
<div class="t" style="left:58.5px;top:374.00px;font-size:9.8px;color:#ecE8e0;font-weight:400;font-family:'Liberation Sans',sans-serif;transform:scaleX(.84)">Sumi</div>
<div class="t" style="left:36.6px;top:387.30px;font-size:9.8px;color:#f0ece4;font-weight:400;font-family:'Liberation Sans',sans-serif;transform:scaleX(0.871);">50</div>
<div class="t" style="left:58.5px;top:387.30px;font-size:9.8px;color:#ecE8e0;font-weight:400;font-family:'Liberation Sans',sans-serif;transform:scaleX(.84)">Watercolor</div>
<div class="t" style="left:36.6px;top:400.60px;font-size:9.8px;color:#f07a8a;font-weight:400;font-family:'Liberation Sans',sans-serif;transform:scaleX(0.871);">18</div>
<div class="t" style="left:58.5px;top:400.60px;font-size:9.8px;color:#ecE8e0;font-weight:400;font-family:'Liberation Sans',sans-serif;transform:scaleX(.84)">Airbrush</div>
<div class="t" style="left:36.6px;top:413.90px;font-size:9.8px;color:#f0ece4;font-weight:400;font-family:'Liberation Sans',sans-serif;transform:scaleX(0.886);">100</div>
<div class="t" style="left:58.5px;top:413.90px;font-size:9.8px;color:#ecE8e0;font-weight:400;font-family:'Liberation Sans',sans-serif;transform:scaleX(.84)">Watercolor (Wet)</div>
<div class="t" style="left:36.6px;top:427.20px;font-size:9.8px;color:#f07a8a;font-weight:400;font-family:'Liberation Sans',sans-serif;transform:scaleX(0.871);">97</div>
<div class="t" style="left:58.5px;top:427.20px;font-size:9.8px;color:#ecE8e0;font-weight:400;font-family:'Liberation Sans',sans-serif;transform:scaleX(.84)">Blur</div>
<div class="t" style="left:36.6px;top:440.50px;font-size:9.8px;color:#f0ece4;font-weight:400;font-family:'Liberation Sans',sans-serif;transform:scaleX(0.871);">50</div>
<div class="t" style="left:58.5px;top:440.50px;font-size:9.8px;color:#ecE8e0;font-weight:400;font-family:'Liberation Sans',sans-serif;transform:scaleX(.84)">Acrylic</div>
<div class="t" style="left:36.6px;top:453.80px;font-size:9.8px;color:#f0ece4;font-weight:400;font-family:'Liberation Sans',sans-serif;transform:scaleX(0.871);">70</div>
<div class="t" style="left:58.5px;top:453.80px;font-size:9.8px;color:#ecE8e0;font-weight:400;font-family:'Liberation Sans',sans-serif;transform:scaleX(.84)">Smudge</div>
<div class="t" style="left:36.6px;top:467.10px;font-size:9.8px;color:#f0ece4;font-weight:400;font-family:'Liberation Sans',sans-serif;transform:scaleX(0.886);">100</div>
<div class="t" style="left:58.5px;top:467.10px;font-size:9.8px;color:#ecE8e0;font-weight:400;font-family:'Liberation Sans',sans-serif;transform:scaleX(.84)">Sparkle Brush</div>
<div class="t" style="left:36.6px;top:480.40px;font-size:9.8px;color:#f0ece4;font-weight:400;font-family:'Liberation Sans',sans-serif;transform:scaleX(0.871);">10</div>
<div class="t" style="left:58.5px;top:480.40px;font-size:9.8px;color:#ecE8e0;font-weight:400;font-family:'Liberation Sans',sans-serif;transform:scaleX(.84)">Rotation Symmetry</div>
<div class="t" style="left:36.6px;top:493.70px;font-size:9.8px;color:#f0ece4;font-weight:400;font-family:'Liberation Sans',sans-serif;transform:scaleX(0.871);">50</div>
<div class="t" style="left:58.5px;top:493.70px;font-size:9.8px;color:#ecE8e0;font-weight:400;font-family:'Liberation Sans',sans-serif;transform:scaleX(.84)">Eraser (Soft)</div>
<div class="t" style="left:36.6px;top:507.00px;font-size:9.8px;color:#f0ece4;font-weight:400;font-family:'Liberation Sans',sans-serif;transform:scaleX(0.871);">50</div>
<div class="t" style="left:58.5px;top:507.00px;font-size:9.8px;color:#ecE8e0;font-weight:400;font-family:'Liberation Sans',sans-serif;transform:scaleX(.84)">Eraser</div>
</div>
<svg class="a" style="left:102.5px;top:280.5px;" width="11" height="11" viewBox="0 0 11 11"><circle cx="5.5" cy="5.5" r="3" fill="#fff"/><path d="M5.5 .5v10M.5 5.5h10M2 2l7 7M9 2l-7 7" stroke="#fff" stroke-width="1.6"/><circle cx="5.5" cy="5.5" r="1.3" fill="#5a9fd8"/></svg>
<div class="a" style="left:114px;top:279px;width:10px;height:237px;background:#2e2e2e"></div>
<svg class="a" style="left:114px;top:280px;" width="10" height="6" viewBox="0 0 10 6"><path d="M2 5L5 1.5L8 5z" fill="#bbb"/></svg>
<div class="a" style="left:115px;top:287px;width:8px;height:53px;background:#585858;border-radius:2px"></div>
<svg class="a" style="left:114px;top:511px;" width="10" height="6" viewBox="0 0 10 6"><path d="M2 1L5 4.5L8 1z" fill="#bbb"/></svg>
<div class="a" style="left:24px;top:518.5px;width:14.799999999999997px;height:14.2px;background:#3e3e3e;border:1px solid #2a2a2a;border-radius:1.5px"></div>
<div class="a" style="left:41px;top:518.5px;width:14.700000000000003px;height:14.2px;background:#3e3e3e;border:1px solid #2a2a2a;border-radius:1.5px"></div>
<div class="a" style="left:58px;top:518.5px;width:18px;height:14.2px;background:#3e3e3e;border:1px solid #2a2a2a;border-radius:1.5px"></div>
<div class="a" style="left:78px;top:518.5px;width:14.400000000000006px;height:14.2px;background:#3e3e3e;border:1px solid #2a2a2a;border-radius:1.5px"></div>
<div class="a" style="left:94.4px;top:518.5px;width:15.0px;height:14.2px;background:#3e3e3e;border:1px solid #2a2a2a;border-radius:1.5px"></div>
<div class="a" style="left:117px;top:519px;width:6px;height:13px;background:#3a3a3a;border-radius:2px"></div>
<svg class="a" style="left:24px;top:518.5px;" width="15" height="14" viewBox="0 0 15 14"><path d="M4 8Q2 8 2.5 6Q3 4.8 4.5 5Q5 2.5 7.5 2.5Q10 2.5 10.5 5Q12.5 5 12.5 7Q12.5 8 11 8z" fill="#eee"/><path d="M7.3 6v6M5.5 10L7.3 12L9 10" stroke="#eee" stroke-width="1.2" fill="none"/></svg>
<svg class="a" style="left:41px;top:518.5px;" width="15" height="14" viewBox="0 0 15 14"><path d="M4 2.5h5l2.5 2.5v7h-7.5z" fill="none" stroke="#ddd" stroke-width="1"/></svg>
<svg class="a" style="left:58px;top:518.5px;" width="18" height="14" viewBox="0 0 18 14"><path d="M3 2.5h5l2 2v7h-7z" fill="none" stroke="#ddd" stroke-width="1"/><rect x="5" y="6" width="2.5" height="2.5" fill="#ddd"/><rect x="7" y="8.5" width="2.5" height="2.5" fill="#ddd"/><path d="M12.5 7.5h3L14 9z" fill="#ddd"/></svg>
<svg class="a" style="left:78px;top:518.5px;" width="15" height="14" viewBox="0 0 15 14"><path d="M4 2.5h5l2.5 2.5v7h-7.5z" fill="none" stroke="#ddd" stroke-width="1"/><path d="M8.5 5.5Q6 5.5 6.5 7Q8.5 8 8.5 9Q8.5 10.5 6 10" stroke="#ddd" fill="none" stroke-width=".9"/></svg>
<svg class="a" style="left:94.4px;top:518.5px;" width="15" height="14" viewBox="0 0 15 14"><path d="M2.5 4h4l1 1.5h5V11h-10z" fill="#eee"/></svg>
<div class="a" style="left:128px;top:48px;width:702px;height:14px;background:#262626"></div>
<div class="a" style="left:128px;top:48px;width:175.8px;height:13.2px;background:#2a2a2a"></div>
<div class="a" style="left:304px;top:48px;width:176px;height:13.2px;background:linear-gradient(#484848,#2e2e2e)"></div>
<div class="a" style="left:480px;top:48px;width:174.4px;height:13.2px;background:#272727;border-left:1px solid #3a3a3a;border-right:1px solid #3c3c3c"></div>
<div class="t" style="left:200px;top:53.00px;font-size:8px;color:#d8d4cc;font-weight:400;font-family:'Liberation Sans',sans-serif;transform:scaleX(0.833);">Mmat.mdp</div>
<div class="t" style="left:380.2px;top:52.50px;font-size:8px;color:#b8b4ae;font-weight:400;font-family:'Liberation Sans',sans-serif;transform:scaleX(0.822);">Untitled</div>
<div class="t" style="left:555.7px;top:52.50px;font-size:8px;color:#c8c4bc;font-weight:400;font-family:'Liberation Sans',sans-serif;transform:scaleX(0.855);">Untitled</div>
<div class="a" style="left:128px;top:62px;width:691px;height:462.5px;background:#4a4846"></div>
<div class="a" style="left:283px;top:80px;width:386px;height:445px;background:#fff"></div>
<svg class="a" style="left:0px;top:0px;pointer-events:none" width="1024" height="576" viewBox="0 0 1024 576"><defs><radialGradient id="ir" cx="0.45" cy="0.35" r="0.65"><stop offset="0" stop-color="#d6cdec"/><stop offset=".55" stop-color="#c0cdef"/><stop offset=".85" stop-color="#c6e2ee"/><stop offset="1" stop-color="#e8f2f6" stop-opacity="0"/></radialGradient><linearGradient id="irl" x1="0.3" y1="0" x2="0.1" y2="1"><stop offset="0" stop-color="#e2d4ee"/><stop offset=".45" stop-color="#c2cdf0"/><stop offset="1" stop-color="#cceaf0"/></linearGradient><radialGradient id="irp" cx=".75" cy=".3" r=".5"><stop offset="0" stop-color="#f2dcea" stop-opacity=".55"/><stop offset="1" stop-color="#f0d8e8" stop-opacity="0"/></radialGradient><filter id="bl" x="-20%" y="-20%" width="140%" height="140%"><feGaussianBlur stdDeviation="1.6"/></filter><filter id="bl2" x="-30%" y="-30%" width="160%" height="160%"><feGaussianBlur stdDeviation="5"/></filter><radialGradient id="pd" cx=".66" cy=".18" r=".6"><stop offset="0" stop-color="#0c0010" stop-opacity="1"/><stop offset=".55" stop-color="#1e0428" stop-opacity=".85"/><stop offset="1" stop-color="#2a0638" stop-opacity="0"/></radialGradient></defs><ellipse cx="357.3" cy="134.3" rx="30.4" ry="31.7" fill="none" stroke="#333a55" stroke-width=".8"/><path transform="translate(0 0)" d="M313.2 122.4 C313.5 116 315.5 112 317.5 108.5 L312.8 108.6 L318.6 106.6 C320.5 103 322.5 100.5 324 99 L316.3 100.8 L326 97 C334 92 344 89.4 352.8 89.4 C362 89.4 372 93 379.2 97.7 C387 103 393 110 396.5 116.6 C398 120 399 122 399.6 123 Q406 123.5 412.5 126 Q406 125.5 400.3 126 C400.6 130 400.8 132 400.8 134 Q405 138 410 145.5 Q404 141.5 401.1 139.5 C401.4 149 399.8 156 397.3 160 C394 165.5 389.5 170 383.3 171.8 C386 165 388.5 152 389 144.6 C389.5 136 388 128 385 121 C381 113 373 106 361 102.6 C354 101 345 101.8 336.3 105.9 C328 109.5 320 115 313.2 122.4 Z" fill="#13286e"/><ellipse cx="555.4" cy="137.8" rx="30" ry="32" fill="url(#irl)" filter="url(#bl)"/><ellipse cx="555.4" cy="137.8" rx="30" ry="32" fill="url(#irp)" filter="url(#bl)"/><path transform="translate(198 4.3)" d="M313.2 122.4 C313.5 116 315.5 112 317.5 108.5 L312.8 108.6 L318.6 106.6 C320.5 103 322.5 100.5 324 99 L316.3 100.8 L326 97 C334 92 344 89.4 352.8 89.4 C362 89.4 372 93 379.2 97.7 C387 103 393 110 396.5 116.6 C398 120 399 122 399.6 123 Q406 123.5 412.5 126 Q406 125.5 400.3 126 C400.6 130 400.8 132 400.8 134 Q405 138 410 145.5 Q404 141.5 401.1 139.5 C401.4 149 399.8 156 397.3 160 C394 165.5 389.5 170 383.3 171.8 C386 165 388.5 152 389 144.6 C389.5 136 388 128 385 121 C381 113 373 106 361 102.6 C354 101 345 101.8 336.3 105.9 C328 109.5 320 115 313.2 122.4 Z" fill="#13286e"/><ellipse cx="361" cy="276.5" rx="31" ry="31.5" fill="url(#irl)" filter="url(#bl)"/><ellipse cx="361" cy="276.5" rx="31" ry="31.5" fill="url(#irp)" filter="url(#bl)"/><circle cx="365.2" cy="274.1" r="4.8" fill="#fff"/><path transform="translate(3.8 142)" d="M313.2 122.4 C313.5 116 315.5 112 317.5 108.5 L312.8 108.6 L318.6 106.6 C320.5 103 322.5 100.5 324 99 L316.3 100.8 L326 97 C334 92 344 89.4 352.8 89.4 C362 89.4 372 93 379.2 97.7 C387 103 393 110 396.5 116.6 C398 120 399 122 399.6 123 Q406 123.5 412.5 126 Q406 125.5 400.3 126 C400.6 130 400.8 132 400.8 134 Q405 138 410 145.5 Q404 141.5 401.1 139.5 C401.4 149 399.8 156 397.3 160 C394 165.5 389.5 170 383.3 171.8 C386 165 388.5 152 389 144.6 C389.5 136 388 128 385 121 C381 113 373 106 361 102.6 C354 101 345 101.8 336.3 105.9 C328 109.5 320 115 313.2 122.4 Z" fill="#13286e"/><ellipse cx="557" cy="277.5" rx="31" ry="31.5" fill="url(#irl)" filter="url(#bl)"/><ellipse cx="557" cy="277.5" rx="31" ry="31.5" fill="url(#irp)" filter="url(#bl)"/><path d="M584.2 267.6 A29 29 0 0 1 575.6 299.7" stroke="#fff" stroke-width="1.2" fill="none" opacity=".9"/><circle cx="561.4" cy="275.7" r="5" fill="#fff"/><ellipse cx="535" cy="263.5" rx="3.5" ry="2" fill="#fff"/><path transform="translate(200.3 143.3)" d="M313.2 122.4 C313.5 116 315.5 112 317.5 108.5 L312.8 108.6 L318.6 106.6 C320.5 103 322.5 100.5 324 99 L316.3 100.8 L326 97 C334 92 344 89.4 352.8 89.4 C362 89.4 372 93 379.2 97.7 C387 103 393 110 396.5 116.6 C398 120 399 122 399.6 123 Q406 123.5 412.5 126 Q406 125.5 400.3 126 C400.6 130 400.8 132 400.8 134 Q405 138 410 145.5 Q404 141.5 401.1 139.5 C401.4 149 399.8 156 397.3 160 C394 165.5 389.5 170 383.3 171.8 C386 165 388.5 152 389 144.6 C389.5 136 388 128 385 121 C381 113 373 106 361 102.6 C354 101 345 101.8 336.3 105.9 C328 109.5 320 115 313.2 122.4 Z" fill="#800e9e"/><path transform="translate(200.3 143.3)" d="M313.2 122.4 C313.5 116 315.5 112 317.5 108.5 L312.8 108.6 L318.6 106.6 C320.5 103 322.5 100.5 324 99 L316.3 100.8 L326 97 C334 92 344 89.4 352.8 89.4 C362 89.4 372 93 379.2 97.7 C387 103 393 110 396.5 116.6 C398 120 399 122 399.6 123 Q406 123.5 412.5 126 Q406 125.5 400.3 126 C400.6 130 400.8 132 400.8 134 Q405 138 410 145.5 Q404 141.5 401.1 139.5 C401.4 149 399.8 156 397.3 160 C394 165.5 389.5 170 383.3 171.8 C386 165 388.5 152 389 144.6 C389.5 136 388 128 385 121 C381 113 373 106 361 102.6 C354 101 345 101.8 336.3 105.9 C328 109.5 320 115 313.2 122.4 Z" fill="url(#pd)"/><rect x="304" y="364" width="113" height="91" fill="#f6dada" fill-opacity=".8" filter="url(#bl2)"/><ellipse cx="362" cy="418" rx="40" ry="36" fill="#fff" fill-opacity=".7" filter="url(#bl2)"/><ellipse cx="359" cy="413" rx="31" ry="31" fill="url(#irl)" filter="url(#bl)"/><ellipse cx="359" cy="413" rx="31" ry="31" fill="url(#irp)" filter="url(#bl)"/><path d="M387.6 408 A29 29 0 0 1 375.6 436.8" stroke="#fff" stroke-width="1.2" fill="none" opacity=".9"/><circle cx="362.9" cy="409.9" r="4.6" fill="#fff"/><ellipse cx="337" cy="399" rx="3.5" ry="2" fill="#fff"/><path transform="translate(0.8 278.4)" d="M313.2 122.4 C313.5 116 315.5 112 317.5 108.5 L312.8 108.6 L318.6 106.6 C320.5 103 322.5 100.5 324 99 L316.3 100.8 L326 97 C334 92 344 89.4 352.8 89.4 C362 89.4 372 93 379.2 97.7 C387 103 393 110 396.5 116.6 C398 120 399 122 399.6 123 Q406 123.5 412.5 126 Q406 125.5 400.3 126 C400.6 130 400.8 132 400.8 134 Q405 138 410 145.5 Q404 141.5 401.1 139.5 C401.4 149 399.8 156 397.3 160 C394 165.5 389.5 170 383.3 171.8 C386 165 388.5 152 389 144.6 C389.5 136 388 128 385 121 C381 113 373 106 361 102.6 C354 101 345 101.8 336.3 105.9 C328 109.5 320 115 313.2 122.4 Z" fill="#800e9e"/><path transform="translate(0.8 278.4)" d="M313.2 122.4 C313.5 116 315.5 112 317.5 108.5 L312.8 108.6 L318.6 106.6 C320.5 103 322.5 100.5 324 99 L316.3 100.8 L326 97 C334 92 344 89.4 352.8 89.4 C362 89.4 372 93 379.2 97.7 C387 103 393 110 396.5 116.6 C398 120 399 122 399.6 123 Q406 123.5 412.5 126 Q406 125.5 400.3 126 C400.6 130 400.8 132 400.8 134 Q405 138 410 145.5 Q404 141.5 401.1 139.5 C401.4 149 399.8 156 397.3 160 C394 165.5 389.5 170 383.3 171.8 C386 165 388.5 152 389 144.6 C389.5 136 388 128 385 121 C381 113 373 106 361 102.6 C354 101 345 101.8 336.3 105.9 C328 109.5 320 115 313.2 122.4 Z" fill="url(#pd)"/><ellipse cx="291.4" cy="89.3" rx="5.4" ry="7.2" fill="none" stroke="#2a2a2a" stroke-width=".8"/><path d="M293 86.2 L291.8 91.8 M291 90.5 L292 92" stroke="#222" stroke-width="1" fill="none"/><ellipse cx="491.8" cy="94" rx="6.4" ry="7" fill="none" stroke="#2a2a2a" stroke-width=".8"/><path d="M491.2 92.2 Q492.5 90.8 494 92 Q494.5 94 492.5 95.8 Q493.5 98 495.3 99.2" stroke="#222" stroke-width=".8" fill="none"/><ellipse cx="298.5" cy="219.7" rx="6.3" ry="6" fill="none" stroke="#2a2a2a" stroke-width=".8"/><path d="M295.6 216.6 Q298.3 215.4 298.1 217.6 Q297.8 218.9 296.6 219.2 Q299 219.8 298.4 221.6 Q297.4 223 295.6 222" stroke="#222" stroke-width=".8" fill="none"/><ellipse cx="496.5" cy="222.5" rx="6.8" ry="7.4" fill="none" stroke="#2a2a2a" stroke-width=".8"/><path d="M499.5 218.5 L494.5 224 L499.5 224 M499.5 221.5 L499.5 226.5" stroke="#222" stroke-width=".8" fill="none"/></svg>
<div class="t" style="left:489.5px;top:387.30px;font-size:6px;color:#111;font-weight:700;font-family:'Liberation Sans',sans-serif;transform:scaleX(1.000);">@ KANHARIN</div>
<div class="t" style="left:494px;top:392.80px;font-size:6px;color:#111;font-weight:700;font-family:'Liberation Sans',sans-serif;transform:scaleX(1.175);">● H7247</div>
<div class="a" style="left:819px;top:61.2px;width:11px;height:463px;background:#393939"></div>
<svg class="a" style="left:819px;top:62px;" width="11" height="7" viewBox="0 0 11 7"><path d="M2.5 6L5.5 2L8.5 6z" fill="#ccc"/></svg>
<div class="a" style="left:820px;top:224.7px;width:9px;height:108px;background:#6a6a6a;border-radius:3px"></div>
<svg class="a" style="left:819px;top:518px;" width="11" height="7" viewBox="0 0 11 7"><path d="M2.5 1.5L5.5 5.5L8.5 1.5z" fill="#ccc"/></svg>
<div class="a" style="left:830px;top:48px;width:3px;height:487px;background:#1e1e1e"></div>
<div class="a" style="left:128px;top:524.5px;width:702px;height:11px;background:linear-gradient(#444,#2c2c2c)"></div>
<div class="a" style="left:381.6px;top:525.5px;width:193.5px;height:9.5px;background:#727272;border-radius:3px"></div>
<svg class="a" style="left:128px;top:525px;" width="8" height="10" viewBox="0 0 8 10"><path d="M6 1.5L2 5L6 8.5z" fill="#ddd"/></svg>
<svg class="a" style="left:822px;top:525px;" width="8" height="10" viewBox="0 0 8 10"><path d="M2 1.5L6 5L2 8.5z" fill="#ccc"/></svg>
<div class="a" style="left:833px;top:48px;width:191px;height:487px;background:#262626"></div>
<div class="a" style="left:833px;top:48px;width:191px;height:12px;background:#353433;border-top:1px solid #4e5c68"></div>
<div class="t" style="left:905.5px;top:51.50px;font-size:8px;color:#bdb8b0;font-weight:400;font-family:'Liberation Sans',sans-serif;transform:scaleX(0.885);">Navigator</div>
<svg class="a" style="left:1005px;top:51px;" width="18" height="8" viewBox="0 0 18 8"><path d="M1.5 1.5v5h5" stroke="#c8c8c8" stroke-width="1" fill="none"/><path d="M3.5 4.5L6.5 1.5M4.8 1h2.2v2.2" stroke="#c8c8c8" stroke-width=".8" fill="none"/><path d="M10.3 1.2L14.3 5.6M14.3 1.2L10.3 5.6" stroke="#e0e0e0" stroke-width="1.5"/></svg>
<div class="a" style="left:833px;top:61px;width:191px;height:17px;background:#262626"></div>
<div class="a" style="left:835px;top:63.2px;width:14.3px;height:14.3px;background:#454545;border:1px solid #2a2a2a;border-radius:1.5px"></div>
<svg class="a" style="left:835px;top:63.2px;" width="15" height="15" viewBox="0 0 15 15"><circle cx="6.5" cy="6" r="4" fill="none" stroke="#ddd" stroke-width="1.2"/><path d="M9.5 9L12.5 12" stroke="#ddd" stroke-width="1.6"/><path d="M6.5 4v4" stroke="#ddd"/></svg>
<div class="a" style="left:855px;top:63.2px;width:14.3px;height:14.3px;background:#454545;border:1px solid #2a2a2a;border-radius:1.5px"></div>
<svg class="a" style="left:855px;top:63.2px;" width="15" height="15" viewBox="0 0 15 15"><circle cx="6.5" cy="6" r="4" fill="none" stroke="#ddd" stroke-width="1.2"/><path d="M9.5 9L12.5 12" stroke="#ddd" stroke-width="1.6"/><path d="M4.5 6h4M6.5 4v4" stroke="#ddd"/></svg>
<div class="a" style="left:872.3px;top:63.2px;width:14.3px;height:14.3px;background:#454545;border:1px solid #2a2a2a;border-radius:1.5px"></div>
<svg class="a" style="left:872.3px;top:63.2px;" width="15" height="15" viewBox="0 0 15 15"><rect x="2.5" y="3" width="10" height="8.5" fill="none" stroke="#ddd" stroke-width="1.2"/><path d="M4 4.5L6 6.5M11 4.5L9 6.5M4 10L6 8M11 10L9 8" stroke="#ddd"/></svg>
<div class="a" style="left:888.8px;top:63.2px;width:14.3px;height:14.3px;background:#454545;border:1px solid #2a2a2a;border-radius:1.5px"></div>
<svg class="a" style="left:888.8px;top:63.2px;" width="15" height="15" viewBox="0 0 15 15"><circle cx="6.5" cy="6" r="4" fill="none" stroke="#ddd" stroke-width="1.2"/><path d="M9.5 9L12.5 12" stroke="#ddd" stroke-width="1.6"/><path d="M4.5 6h4" stroke="#ddd"/></svg>
<div class="a" style="left:909.4px;top:63.2px;width:14.3px;height:14.3px;background:#454545;border:1px solid #2a2a2a;border-radius:1.5px"></div>
<svg class="a" style="left:909.4px;top:63.2px;" width="15" height="15" viewBox="0 0 15 15"><circle cx="7" cy="7" r="5" fill="none" stroke="#ddd" stroke-width="1.3"/><rect x="4.5" y="5" width="5" height="4" fill="#ddd" transform="rotate(-20 7 7)"/></svg>
<div class="a" style="left:925.6px;top:63.2px;width:14.3px;height:14.3px;background:#1e1e1e;border:1px solid #555;border-radius:1.5px"></div>
<svg class="a" style="left:925.6px;top:63.2px;" width="15" height="15" viewBox="0 0 15 15"><rect x="3.5" y="4" width="7.5" height="6.5" fill="#e8e8e8"/><path d="M2 2.5L4 4.5M13 2.5L11 4.5M2 12L4 10M13 12L11 10" stroke="#ddd"/></svg>
<div class="a" style="left:942.2px;top:63.2px;width:14.3px;height:14.3px;background:#454545;border:1px solid #2a2a2a;border-radius:1.5px"></div>
<svg class="a" style="left:942.2px;top:63.2px;" width="15" height="15" viewBox="0 0 15 15"><circle cx="7" cy="7" r="5" fill="none" stroke="#ddd" stroke-width="1.3"/><rect x="4.5" y="5" width="5" height="4" fill="#ddd" transform="rotate(20 7 7)"/></svg>
<div class="a" style="left:962.5px;top:63.2px;width:14.3px;height:14.3px;background:#454545;border:1px solid #2a2a2a;border-radius:1.5px"></div>
<svg class="a" style="left:962.5px;top:63.2px;" width="15" height="15" viewBox="0 0 15 15"><path d="M4 7V4.5Q4 2 7.5 2Q11 2 11 4.5V6" stroke="#ddd" stroke-width="1.2" fill="none"/><rect x="3" y="7" width="3.5" height="5" fill="#ddd"/><path d="M8.5 7v5h3V7" stroke="#ddd" fill="none"/></svg>
<div class="a" style="left:852.4px;top:66px;width:1px;height:8px;background:#555"></div>
<div class="a" style="left:905.3px;top:66px;width:1px;height:8px;background:#555"></div>
<div class="a" style="left:959.5px;top:66px;width:1px;height:8px;background:#555"></div>
<div class="a" style="left:833px;top:78px;width:191px;height:45.4px;background:#4a4846"></div>
<div class="a" style="left:913.6px;top:79px;width:30.4px;height:44.4px;background:#fff"></div>
<svg class="a" style="left:0px;top:0px;" width="1024" height="576" viewBox="0 0 1024 576"><g transform="translate(913.6 79) scale(0.0787)"><ellipse cx="74.30000000000001" cy="54.30000000000001" rx="31" ry="31" fill="none" stroke="#888" stroke-width="6"/><path transform="translate(-283 -80)" d="M313.2 122.4 C313.5 116 315.5 112 317.5 108.5 L312.8 108.6 L318.6 106.6 C320.5 103 322.5 100.5 324 99 L316.3 100.8 L326 97 C334 92 344 89.4 352.8 89.4 C362 89.4 372 93 379.2 97.7 C387 103 393 110 396.5 116.6 C398 120 399 122 399.6 123 Q406 123.5 412.5 126 Q406 125.5 400.3 126 C400.6 130 400.8 132 400.8 134 Q405 138 410 145.5 Q404 141.5 401.1 139.5 C401.4 149 399.8 156 397.3 160 C394 165.5 389.5 170 383.3 171.8 C386 165 388.5 152 389 144.6 C389.5 136 388 128 385 121 C381 113 373 106 361 102.6 C354 101 345 101.8 336.3 105.9 C328 109.5 320 115 313.2 122.4 Z" fill="#13286e" stroke="#13286e" stroke-width="8"/><ellipse cx="272.29999999999995" cy="58.60000000000002" rx="31" ry="31" fill="#c8cdee"/><path transform="translate(-85 -75.7)" d="M313.2 122.4 C313.5 116 315.5 112 317.5 108.5 L312.8 108.6 L318.6 106.6 C320.5 103 322.5 100.5 324 99 L316.3 100.8 L326 97 C334 92 344 89.4 352.8 89.4 C362 89.4 372 93 379.2 97.7 C387 103 393 110 396.5 116.6 C398 120 399 122 399.6 123 Q406 123.5 412.5 126 Q406 125.5 400.3 126 C400.6 130 400.8 132 400.8 134 Q405 138 410 145.5 Q404 141.5 401.1 139.5 C401.4 149 399.8 156 397.3 160 C394 165.5 389.5 170 383.3 171.8 C386 165 388.5 152 389 144.6 C389.5 136 388 128 385 121 C381 113 373 106 361 102.6 C354 101 345 101.8 336.3 105.9 C328 109.5 320 115 313.2 122.4 Z" fill="#13286e" stroke="#13286e" stroke-width="8"/><ellipse cx="78.10000000000002" cy="196.3" rx="31" ry="31" fill="#c8cdee"/><path transform="translate(-279.2 62)" d="M313.2 122.4 C313.5 116 315.5 112 317.5 108.5 L312.8 108.6 L318.6 106.6 C320.5 103 322.5 100.5 324 99 L316.3 100.8 L326 97 C334 92 344 89.4 352.8 89.4 C362 89.4 372 93 379.2 97.7 C387 103 393 110 396.5 116.6 C398 120 399 122 399.6 123 Q406 123.5 412.5 126 Q406 125.5 400.3 126 C400.6 130 400.8 132 400.8 134 Q405 138 410 145.5 Q404 141.5 401.1 139.5 C401.4 149 399.8 156 397.3 160 C394 165.5 389.5 170 383.3 171.8 C386 165 388.5 152 389 144.6 C389.5 136 388 128 385 121 C381 113 373 106 361 102.6 C354 101 345 101.8 336.3 105.9 C328 109.5 320 115 313.2 122.4 Z" fill="#13286e" stroke="#13286e" stroke-width="8"/><ellipse cx="274.6" cy="197.60000000000002" rx="31" ry="31" fill="#c8cdee"/><path transform="translate(-82.69999999999999 63.30000000000001)" d="M313.2 122.4 C313.5 116 315.5 112 317.5 108.5 L312.8 108.6 L318.6 106.6 C320.5 103 322.5 100.5 324 99 L316.3 100.8 L326 97 C334 92 344 89.4 352.8 89.4 C362 89.4 372 93 379.2 97.7 C387 103 393 110 396.5 116.6 C398 120 399 122 399.6 123 Q406 123.5 412.5 126 Q406 125.5 400.3 126 C400.6 130 400.8 132 400.8 134 Q405 138 410 145.5 Q404 141.5 401.1 139.5 C401.4 149 399.8 156 397.3 160 C394 165.5 389.5 170 383.3 171.8 C386 165 388.5 152 389 144.6 C389.5 136 388 128 385 121 C381 113 373 106 361 102.6 C354 101 345 101.8 336.3 105.9 C328 109.5 320 115 313.2 122.4 Z" fill="#4a0a60" stroke="#4a0a60" stroke-width="8"/><ellipse cx="75.10000000000002" cy="332.7" rx="31" ry="31" fill="#c8cdee"/><path transform="translate(-282.2 198.39999999999998)" d="M313.2 122.4 C313.5 116 315.5 112 317.5 108.5 L312.8 108.6 L318.6 106.6 C320.5 103 322.5 100.5 324 99 L316.3 100.8 L326 97 C334 92 344 89.4 352.8 89.4 C362 89.4 372 93 379.2 97.7 C387 103 393 110 396.5 116.6 C398 120 399 122 399.6 123 Q406 123.5 412.5 126 Q406 125.5 400.3 126 C400.6 130 400.8 132 400.8 134 Q405 138 410 145.5 Q404 141.5 401.1 139.5 C401.4 149 399.8 156 397.3 160 C394 165.5 389.5 170 383.3 171.8 C386 165 388.5 152 389 144.6 C389.5 136 388 128 385 121 C381 113 373 106 361 102.6 C354 101 345 101.8 336.3 105.9 C328 109.5 320 115 313.2 122.4 Z" fill="#5a0a70" stroke="#5a0a70" stroke-width="8"/><rect x="206" y="306" width="40" height="14" fill="#555"/></g></svg>
<div class="a" style="left:902.3px;top:78px;width:53.7px;height:37.2px;border:2px solid #d02a2a;border-top:none"></div>
<div class="a" style="left:833px;top:123.4px;width:191px;height:3px;background:#1e1e1e"></div>
<div class="a" style="left:833px;top:126.6px;width:191px;height:12px;background:#353433;border-top:1px solid #4e5c68"></div>
<div class="t" style="left:911.5px;top:130.10px;font-size:8px;color:#bdb8b0;font-weight:400;font-family:'Liberation Sans',sans-serif;transform:scaleX(0.849);">Layer</div>
<svg class="a" style="left:1005px;top:129.6px;" width="18" height="8" viewBox="0 0 18 8"><path d="M1.5 1.5v5h5" stroke="#c8c8c8" stroke-width="1" fill="none"/><path d="M3.5 4.5L6.5 1.5M4.8 1h2.2v2.2" stroke="#c8c8c8" stroke-width=".8" fill="none"/><path d="M10.3 1.2L14.3 5.6M14.3 1.2L10.3 5.6" stroke="#e0e0e0" stroke-width="1.5"/></svg>
<div class="a" style="left:833px;top:139.8px;width:191px;height:313px;background:#262626"></div>
<div class="t" style="left:836.6px;top:144.60px;font-size:8px;color:#cbc6be;font-weight:400;font-family:'Liberation Sans',sans-serif;transform:scaleX(0.822);">Opacity</div>
<div class="a" style="left:884.5px;top:142.3px;width:110.6px;height:9.9px;background:linear-gradient(to right,#7cc4f6,#4d98d8);border-bottom:1px solid #2a5a88"></div>
<div class="t" style="left:999px;top:144.60px;font-size:8px;color:#d8d4cc;font-weight:400;font-family:'Liberation Sans',sans-serif;transform:scaleX(0.860);">100 %</div>
<div class="a" style="left:885.3px;top:157px;width:134.7px;height:11.7px;background:#3c3c3c;border-radius:1px"></div>
<div class="t" style="left:836.6px;top:159.20px;font-size:8px;color:#9a968f;font-weight:400;font-family:'Liberation Sans',sans-serif;transform:scaleX(0.771);">Blending</div>
<div class="t" style="left:887px;top:159.20px;font-size:8px;color:#9a968f;font-weight:400;font-family:'Liberation Sans',sans-serif;transform:scaleX(0.853);">Normal</div>
<svg class="a" style="left:1012px;top:160px;" width="6" height="5" viewBox="0 0 6 5"><path d="M.5 .5h5L3 4z" fill="#888"/></svg>
<div class="a" style="left:838.3px;top:175.8px;width:6px;height:6.5px;border:1px solid #ccc"></div>
<div class="t" style="left:847.3px;top:175.50px;font-size:8px;color:#c6c1b9;font-weight:400;font-family:'Liberation Sans',sans-serif;transform:scaleX(0.851);">Protect Alpha</div>
<div class="a" style="left:903.5px;top:175.8px;width:6px;height:6.5px;border:1px solid #ccc"></div>
<div class="t" style="left:912px;top:175.50px;font-size:8px;color:#c6c1b9;font-weight:400;font-family:'Liberation Sans',sans-serif;transform:scaleX(0.848);">Clipping</div>
<div class="a" style="left:963px;top:175.8px;width:6px;height:6.5px;border:1px solid #ccc"></div>
<div class="t" style="left:972.75px;top:175.50px;font-size:8px;color:#c6c1b9;font-weight:400;font-family:'Liberation Sans',sans-serif;transform:scaleX(0.813);">Lock</div>
<div class="a" style="left:835px;top:187px;width:177.3px;height:243.2px;background:#4b4a48"></div>
<div class="a" style="left:835px;top:187.0px;width:177.3px;height:26.5px;background:#595959;border-bottom:1px solid #404040"></div>
<svg class="a" style="left:836px;top:196.0px;" width="9" height="9" viewBox="0 0 9 9"><circle cx="4.5" cy="4.5" r="3.3" fill="#ddd"/><circle cx="4" cy="4" r="1.8" fill="#f4f4f4"/></svg>
<svg class="a" style="left:857px;top:197.0px;" width="23.5" height="7" viewBox="0 0 23.5 7"><rect x="0" y="0.3" width="23.5" height="6.4" fill="#f4f4f4"/><path d="M2.5 1.5v4M4 1.5L2.8 3.5L4.2 5.5M6 2.5v3M8 2.5v3h1.5M11 1.5v4M13 1.5v4M11 3.5h2M15.5 2.5v3M17.5 2.5h1.5v3M20 2.5v3" stroke="#111" stroke-width=".9" fill="none"/></svg>
<svg class="a" style="left:890px;top:196.0px;" width="9" height="9" viewBox="0 0 9 9"><circle cx="4" cy="4.5" r="3" fill="none" stroke="#ddd" stroke-width=".9"/><circle cx="4" cy="4.5" r="1.3" fill="none" stroke="#ddd" stroke-width=".8"/></svg>
<div class="t" style="left:900.5px;top:195.90px;font-size:9.8px;color:#eeeae2;font-weight:400;font-family:'Liberation Sans',sans-serif;transform:scaleX(0.857);">KanHarin</div>
<div class="a" style="left:835px;top:213.5px;width:177.3px;height:26.5px;background:#595959;border-bottom:1px solid #404040"></div>
<div class="a" style="left:847.4px;top:213.5px;width:164.9px;height:26.5px;background:#5a9fd8;border-bottom:1px solid #3e6a90"></div>
<svg class="a" style="left:836px;top:222.5px;" width="9" height="9" viewBox="0 0 9 9"><circle cx="4.5" cy="4.5" r="3.3" fill="#ddd"/><circle cx="4" cy="4" r="1.8" fill="#f4f4f4"/></svg>
<div class="a" style="left:860.7px;top:215.8px;width:15.8px;height:23.3px;background-color:#fff;background-image:linear-gradient(45deg,#e2e2e2 25%,transparent 25%,transparent 75%,#e2e2e2 75%),linear-gradient(45deg,#e2e2e2 25%,transparent 25%,transparent 75%,#e2e2e2 75%);background-size:6px 6px;background-position:0 0,3px 3px"></div>
<div class="t" style="left:891.2px;top:222.10px;font-size:9.8px;color:#fff;font-weight:700;font-family:'Liberation Sans',sans-serif;transform:scaleX(0.912);">Layer8</div>
<div class="a" style="left:835px;top:240.0px;width:177.3px;height:26.5px;background:#595959;border-bottom:1px solid #404040"></div>
<svg class="a" style="left:836px;top:249.0px;" width="9" height="9" viewBox="0 0 9 9"><circle cx="4.5" cy="4.5" r="3.3" fill="#ddd"/><circle cx="4" cy="4" r="1.8" fill="#f4f4f4"/></svg>
<div class="a" style="left:860.7px;top:242.3px;width:15.8px;height:23.3px;background-color:#fff;background-image:linear-gradient(45deg,#e2e2e2 25%,transparent 25%,transparent 75%,#e2e2e2 75%),linear-gradient(45deg,#e2e2e2 25%,transparent 25%,transparent 75%,#e2e2e2 75%);background-size:6px 6px;background-position:0 0,3px 3px"></div>
<div class="t" style="left:891.4px;top:248.90px;font-size:9.8px;color:#eeeae2;font-weight:400;font-family:'Liberation Sans',sans-serif;transform:scaleX(0.831);">Layer6</div>
<div class="a" style="left:835px;top:266.5px;width:177.3px;height:26.5px;background:#595959;border-bottom:1px solid #404040"></div>
<svg class="a" style="left:836px;top:275.5px;" width="9" height="9" viewBox="0 0 9 9"><circle cx="4.5" cy="4.5" r="3.3" fill="#ddd"/><circle cx="4" cy="4" r="1.8" fill="#f4f4f4"/></svg>
<div class="a" style="left:860.7px;top:268.8px;width:15.8px;height:23.3px;background-color:#fff;background-image:linear-gradient(45deg,#e2e2e2 25%,transparent 25%,transparent 75%,#e2e2e2 75%),linear-gradient(45deg,#e2e2e2 25%,transparent 25%,transparent 75%,#e2e2e2 75%);background-size:6px 6px;background-position:0 0,3px 3px"></div>
<div class="t" style="left:891.4px;top:275.40px;font-size:9.8px;color:#eeeae2;font-weight:400;font-family:'Liberation Sans',sans-serif;transform:scaleX(0.831);">Layer5</div>
<div class="a" style="left:835px;top:293.0px;width:177.3px;height:26.5px;background:#595959;border-bottom:1px solid #404040"></div>
<svg class="a" style="left:836px;top:302.0px;" width="9" height="9" viewBox="0 0 9 9"><circle cx="4.5" cy="4.5" r="3.3" fill="#ddd"/><circle cx="4" cy="4" r="1.8" fill="#f4f4f4"/></svg>
<div class="a" style="left:860.7px;top:295.3px;width:15.8px;height:23.3px;background-color:#fff;background-image:linear-gradient(45deg,#e2e2e2 25%,transparent 25%,transparent 75%,#e2e2e2 75%),linear-gradient(45deg,#e2e2e2 25%,transparent 25%,transparent 75%,#e2e2e2 75%);background-size:6px 6px;background-position:0 0,3px 3px"></div>
<div class="t" style="left:891.4px;top:301.90px;font-size:9.8px;color:#eeeae2;font-weight:400;font-family:'Liberation Sans',sans-serif;transform:scaleX(0.831);">Layer4</div>
<div class="a" style="left:835px;top:319.5px;width:177.3px;height:26.5px;background:#595959;border-bottom:1px solid #404040"></div>
<svg class="a" style="left:836px;top:328.5px;" width="9" height="9" viewBox="0 0 9 9"><circle cx="4.5" cy="4.5" r="3.3" fill="#ddd"/><circle cx="4" cy="4" r="1.8" fill="#f4f4f4"/></svg>
<div class="a" style="left:860.7px;top:321.8px;width:15.8px;height:23.3px;background-color:#fff;background-image:linear-gradient(45deg,#e2e2e2 25%,transparent 25%,transparent 75%,#e2e2e2 75%),linear-gradient(45deg,#e2e2e2 25%,transparent 25%,transparent 75%,#e2e2e2 75%);background-size:6px 6px;background-position:0 0,3px 3px"></div>
<div class="t" style="left:891.4px;top:328.40px;font-size:9.8px;color:#eeeae2;font-weight:400;font-family:'Liberation Sans',sans-serif;transform:scaleX(0.831);">Layer3</div>
<div class="a" style="left:835px;top:346.0px;width:177.3px;height:26.5px;background:#595959;border-bottom:1px solid #404040"></div>
<svg class="a" style="left:836px;top:355.0px;" width="9" height="9" viewBox="0 0 9 9"><circle cx="4.5" cy="4.5" r="3.3" fill="#ddd"/><circle cx="4" cy="4" r="1.8" fill="#f4f4f4"/></svg>
<div class="a" style="left:860.7px;top:348.3px;width:15.8px;height:23.3px;background-color:#fff;background-image:linear-gradient(45deg,#e2e2e2 25%,transparent 25%,transparent 75%,#e2e2e2 75%),linear-gradient(45deg,#e2e2e2 25%,transparent 25%,transparent 75%,#e2e2e2 75%);background-size:6px 6px;background-position:0 0,3px 3px"></div>
<div class="t" style="left:891.4px;top:354.90px;font-size:9.8px;color:#eeeae2;font-weight:400;font-family:'Liberation Sans',sans-serif;transform:scaleX(0.831);">Layer2</div>
<svg class="a" style="left:860px;top:213px;" width="20" height="26" viewBox="0 0 20 26"><path d="M2 7L4 5.5L6 8" stroke="#5a3a6a" stroke-width="1" fill="none"/></svg>
<svg class="a" style="left:860px;top:266px;" width="20" height="26" viewBox="0 0 20 26"><path d="M11 5L13 4.5L14 7" stroke="#223070" stroke-width="1.2" fill="none"/></svg>
<svg class="a" style="left:860px;top:293px;" width="20" height="26" viewBox="0 0 20 26"><path d="M2 7L4 6L5 8" stroke="#223070" stroke-width="1" fill="none"/></svg>
<svg class="a" style="left:860px;top:319px;" width="20" height="26" viewBox="0 0 20 26"><path d="M11 3L13 3L14 6" stroke="#223070" stroke-width="1.2" fill="none"/></svg>
<svg class="a" style="left:860px;top:346px;" width="20" height="26" viewBox="0 0 20 26"><path d="M2 3L3.5 2.5" stroke="#223070" stroke-width="1" fill="none"/></svg>
<svg class="a" style="left:997px;top:220px;" width="13" height="13" viewBox="0 0 13 13"><circle cx="6.5" cy="6.5" r="3.5" fill="#fff"/><path d="M6.5 .8v11.4M.8 6.5h11.4M2.5 2.5l8 8M10.5 2.5l-8 8" stroke="#fff" stroke-width="1.9"/><circle cx="6.5" cy="6.5" r="1.5" fill="#5a9fd8"/></svg>
<div class="a" style="left:1013px;top:187px;width:9.5px;height:243px;background:#2e2e2e"></div>
<svg class="a" style="left:1013px;top:188px;" width="10" height="6" viewBox="0 0 10 6"><path d="M2 5L5 1.5L8 5z" fill="#bbb"/></svg>
<div class="a" style="left:1014px;top:193px;width:7.5px;height:230px;background:#5e5e5e;border-radius:3px"></div>
<svg class="a" style="left:1013px;top:424px;" width="10" height="6" viewBox="0 0 10 6"><path d="M2 1L5 4.5L8 1z" fill="#bbb"/></svg>
<div class="a" style="left:836.3px;top:431.4px;width:14.700000000000045px;height:15.8px;background:#454545;border:1px solid #2a2a2a;border-radius:1.5px"></div>
<svg class="a" style="left:836.3px;top:432px;" width="14.700000000000045" height="15" viewBox="0 0 14.700000000000045 15"><path d="M4 2.5h5l2.5 2.5v7.5h-7.5z" fill="none" stroke="#ddd" stroke-width="1"/></svg>
<div class="a" style="left:852.6px;top:431.4px;width:14.199999999999932px;height:15.8px;background:#454545;border:1px solid #2a2a2a;border-radius:1.5px"></div>
<svg class="a" style="left:852.6px;top:432px;" width="14.199999999999932" height="15" viewBox="0 0 14.199999999999932 15"><path d="M3.5 2.5h5l2.5 2.5v7.5h-7.5z" fill="none" stroke="#ddd" stroke-width="1"/><text x="5" y="11" font-size="6" fill="#ddd" font-family="Liberation Sans">8</text></svg>
<div class="a" style="left:868.8px;top:431.4px;width:14.900000000000091px;height:15.8px;background:#454545;border:1px solid #2a2a2a;border-radius:1.5px"></div>
<svg class="a" style="left:868.8px;top:432px;" width="14.900000000000091" height="15" viewBox="0 0 14.900000000000091 15"><path d="M3.5 2.5h5l2.5 2.5v7.5h-7.5z" fill="none" stroke="#ddd" stroke-width="1"/><text x="5.5" y="11" font-size="6" fill="#ddd" font-family="Liberation Sans">1</text></svg>
<div class="a" style="left:886px;top:431.4px;width:17.5px;height:15.8px;background:#454545;border:1px solid #5a7a9a;border-radius:1.5px"></div>
<svg class="a" style="left:886px;top:432px;" width="17.5" height="15" viewBox="0 0 17.5 15"><path d="M3 2.5h5l2 2v7.5h-7z" fill="none" stroke="#ddd" stroke-width="1"/><path d="M6.5 8v5M4 10.5h5" stroke="#eee" stroke-width="1.2"/><path d="M12.5 7.5h3L14 9z" fill="#ddd"/></svg>
<div class="a" style="left:906.2px;top:431.4px;width:14.5px;height:15.8px;background:#454545;border:1px solid #2a2a2a;border-radius:1.5px"></div>
<svg class="a" style="left:906.2px;top:432px;" width="14.5" height="15" viewBox="0 0 14.5 15"><path d="M2.5 4h4l1 1.5h5.5V12h-10.5z" fill="#eee"/></svg>
<div class="a" style="left:926.5px;top:431.4px;width:14.5px;height:15.8px;background:#454545;border:1px solid #2a2a2a;border-radius:1.5px"></div>
<svg class="a" style="left:926.5px;top:432px;" width="14.5" height="15" viewBox="0 0 14.5 15"><rect x="5" y="2.5" width="7" height="7" fill="none" stroke="#ddd"/><rect x="2.5" y="5" width="7" height="7" fill="#454545" stroke="#ddd"/></svg>
<div class="a" style="left:942.8px;top:431.4px;width:14.200000000000045px;height:15.8px;background:#454545;border:1px solid #2a2a2a;border-radius:1.5px"></div>
<svg class="a" style="left:942.8px;top:432px;" width="14.200000000000045" height="15" viewBox="0 0 14.200000000000045 15"><rect x="3" y="3" width="4" height="8" fill="none" stroke="#ddd"/><rect x="8" y="5" width="4.5" height="4" fill="#eee"/><path d="M4 9L7 5" stroke="#ddd"/></svg>
<div class="a" style="left:963px;top:431.4px;width:14.799999999999955px;height:15.8px;background:#454545;border:1px solid #2a2a2a;border-radius:1.5px"></div>
<svg class="a" style="left:963px;top:432px;" width="14.799999999999955" height="15" viewBox="0 0 14.799999999999955 15"><path d="M3 4h9M6 4V2.5h3V4M4 4.5v8h7v-8M6 6v5M7.5 6v5M9 6v5" stroke="#ddd" stroke-width=".9" fill="none"/></svg>
<div class="a" style="left:923.6px;top:435px;width:1px;height:8px;background:#555"></div>
<div class="a" style="left:960.2px;top:435px;width:1px;height:8px;background:#555"></div>
<div class="a" style="left:833px;top:450px;width:191px;height:3px;background:#1e1e1e"></div>
<div class="a" style="left:833px;top:452.8px;width:191px;height:12px;background:#353433;border-top:1px solid #4e5c68"></div>
<div class="t" style="left:904.5px;top:456.30px;font-size:8px;color:#bdb8b0;font-weight:400;font-family:'Liberation Sans',sans-serif;transform:scaleX(0.827);">Brush Size</div>
<svg class="a" style="left:1005px;top:455.8px;" width="18" height="8" viewBox="0 0 18 8"><path d="M1.5 1.5v5h5" stroke="#c8c8c8" stroke-width="1" fill="none"/><path d="M3.5 4.5L6.5 1.5M4.8 1h2.2v2.2" stroke="#c8c8c8" stroke-width=".8" fill="none"/><path d="M10.3 1.2L14.3 5.6M14.3 1.2L10.3 5.6" stroke="#e0e0e0" stroke-width="1.5"/></svg>
<div class="a" style="left:833px;top:464.8px;width:191px;height:70px;background:#262626"></div>
<div class="a" style="left:833px;top:465px;width:180px;height:57px;background:#4f4f4f"></div>
<div class="a" style="left:833px;top:465px;width:180px;height:57px;overflow:hidden">
<div class="a" style="left:0px;top:0;width:26.600000000000023px;height:33.3px;background:#585858;border-right:1px solid #444;border-bottom:1px solid #444"></div>
<div class="a" style="left:0px;top:33.3px;width:26.600000000000023px;height:24px;background:#585858;border-right:1px solid #444"></div>
<div class="a" style="left:13.10px;top:13.50px;width:0.60px;height:0.60px;border-radius:50%;background:#eee"></div>
<div class="a" style="left:10.00px;top:43.20px;width:6.80px;height:6.80px;border-radius:50%;background:#f0f0f0"></div>
<div class="a" style="left:26.600000000000023px;top:0;width:27.0px;height:33.3px;background:#585858;border-right:1px solid #444;border-bottom:1px solid #444"></div>
<div class="a" style="left:26.600000000000023px;top:33.3px;width:27.0px;height:24px;background:#585858;border-right:1px solid #444"></div>
<div class="a" style="left:39.50px;top:13.30px;width:1.00px;height:1.00px;border-radius:50%;background:#eee"></div>
<div class="a" style="left:35.80px;top:42.40px;width:8.40px;height:8.40px;border-radius:50%;background:#f0f0f0"></div>
<div class="a" style="left:53.60000000000002px;top:0;width:26.399999999999977px;height:33.3px;background:#585858;border-right:1px solid #444;border-bottom:1px solid #444"></div>
<div class="a" style="left:53.60000000000002px;top:33.3px;width:26.399999999999977px;height:24px;background:#585858;border-right:1px solid #444"></div>
<div class="a" style="left:66.40px;top:13.20px;width:1.20px;height:1.20px;border-radius:50%;background:#eee"></div>
<div class="a" style="left:61.50px;top:41.10px;width:11.00px;height:11.00px;border-radius:50%;background:#f0f0f0"></div>
<div class="a" style="left:80px;top:0;width:27px;height:33.3px;background:#585858;border-right:1px solid #444;border-bottom:1px solid #444"></div>
<div class="a" style="left:80px;top:33.3px;width:27px;height:24px;background:#585858;border-right:1px solid #444"></div>
<div class="a" style="left:92.60px;top:13.00px;width:1.60px;height:1.60px;border-radius:50%;background:#eee"></div>
<div class="a" style="left:86.60px;top:39.80px;width:13.60px;height:13.60px;border-radius:50%;background:#f0f0f0"></div>
<div class="a" style="left:107px;top:0;width:26.5px;height:33.3px;background:#585858;border-right:1px solid #444;border-bottom:1px solid #444"></div>
<div class="a" style="left:107px;top:33.3px;width:26.5px;height:24px;background:#585858;border-right:1px solid #444"></div>
<div class="a" style="left:119.20px;top:12.60px;width:2.40px;height:2.40px;border-radius:50%;background:#eee"></div>
<div class="a" style="left:112.30px;top:38.50px;width:16.20px;height:16.20px;border-radius:50%;background:#f0f0f0"></div>
<div class="a" style="left:133.5px;top:0;width:26.5px;height:33.3px;background:#585858;border-right:1px solid #444;border-bottom:1px solid #444"></div>
<div class="a" style="left:133.5px;top:33.3px;width:26.5px;height:24px;background:#585858;border-right:1px solid #444"></div>
<div class="a" style="left:145.30px;top:12.20px;width:3.20px;height:3.20px;border-radius:50%;background:#eee"></div>
<div class="a" style="left:138.80px;top:38.50px;width:16.20px;height:16.20px;border-radius:50%;background:#f0f0f0"></div>
<div class="a" style="left:160px;top:0;width:27px;height:33.3px;background:#585858;border-right:1px solid #444;border-bottom:1px solid #444"></div>
<div class="a" style="left:160px;top:33.3px;width:27px;height:24px;background:#585858;border-right:1px solid #444"></div>
<div class="a" style="left:170.80px;top:11.20px;width:5.20px;height:5.20px;border-radius:50%;background:#eee"></div>
<div class="a" style="left:165.30px;top:38.50px;width:16.20px;height:16.20px;border-radius:50%;background:#f0f0f0"></div>
</div>
<div class="t" style="left:844.65px;top:491.00px;font-size:7px;color:#e8e4dc;font-weight:400;font-family:'Liberation Sans',sans-serif;transform:scaleX(0.896);">1</div>
<div class="t" style="left:869.5px;top:491.00px;font-size:7px;color:#e8e4dc;font-weight:400;font-family:'Liberation Sans',sans-serif;transform:scaleX(0.719);">1.5</div>
<div class="t" style="left:898.25px;top:491.00px;font-size:7px;color:#e8e4dc;font-weight:400;font-family:'Liberation Sans',sans-serif;transform:scaleX(0.896);">2</div>
<div class="t" style="left:924.65px;top:491.00px;font-size:7px;color:#e8e4dc;font-weight:400;font-family:'Liberation Sans',sans-serif;transform:scaleX(0.896);">3</div>
<div class="t" style="left:951.65px;top:491.00px;font-size:7px;color:#e8e4dc;font-weight:400;font-family:'Liberation Sans',sans-serif;transform:scaleX(0.896);">4</div>
<div class="t" style="left:978.15px;top:491.00px;font-size:7px;color:#e8e4dc;font-weight:400;font-family:'Liberation Sans',sans-serif;transform:scaleX(0.896);">5</div>
<div class="t" style="left:1004.65px;top:491.00px;font-size:7px;color:#e8e4dc;font-weight:400;font-family:'Liberation Sans',sans-serif;transform:scaleX(0.896);">7</div>
<div class="a" style="left:1013.8px;top:465px;width:8.2px;height:57px;background:#2e2e2e"></div>
<svg class="a" style="left:1013.8px;top:466px;" width="9" height="6" viewBox="0 0 9 6"><path d="M1.5 5L4.5 1.5L7.5 5z" fill="#bbb"/></svg>
<div class="a" style="left:1014.5px;top:472px;width:7px;height:30px;background:#5e5e5e;border-radius:3px"></div>
<svg class="a" style="left:1013.8px;top:516px;" width="9" height="6" viewBox="0 0 9 6"><path d="M1.5 1L4.5 4.5L7.5 1z" fill="#bbb"/></svg>
<div class="a" style="left:832.8px;top:522px;width:37.9px;height:12.3px;background:#3a3a3a"></div>
<div class="t" style="left:836px;top:526.00px;font-size:8px;color:#cfcac2;font-weight:400;font-family:'Liberation Sans',sans-serif;transform:scaleX(0.853);">Brush Size</div>
<div class="t" style="left:873.6px;top:525.00px;font-size:8px;color:#cfcac2;font-weight:400;font-family:'Liberation Sans',sans-serif;transform:scaleX(0.785);">Reference</div>
<div class="a" style="left:0px;top:535px;width:1024px;height:13px;background:#222221"></div>
<div class="a" style="left:128px;top:535px;width:702px;height:1px;background:#5a5a5a"></div>
<div class="t" style="left:3.6px;top:539.00px;font-size:9px;color:#d8d4cc;font-weight:400;font-family:'Liberation Sans',sans-serif;transform:scaleX(0.858);">Add Layer</div>
<div class="a" style="left:0px;top:548px;width:1024px;height:28px;background:#f1e8b2"></div>
<div class="a" style="left:0px;top:548px;width:1024px;height:1px;background:#1a1a1a"></div>
<div class="a" style="left:32px;top:549px;width:229px;height:27px;background:#fefdf8"></div>
<svg class="a" style="left:10px;top:556px;" width="12" height="12" viewBox="0 0 12 12"><path d="M0.5 2L5.2 1.3V5.6H0.5zM6.2 1.1L11.5 0.3V5.6H6.2zM0.5 6.5H5.2V10.8L0.5 10.1zM6.2 6.5H11.5V11.7L6.2 10.9z" fill="#111"/></svg>
<svg class="a" style="left:39px;top:556px;" width="13" height="13" viewBox="0 0 13 13"><circle cx="7.8" cy="5" r="3.8" fill="none" stroke="#222" stroke-width="1.2"/><path d="M5.2 7.6L1.2 11.6" stroke="#222" stroke-width="1.3"/></svg>
<div class="t" style="left:59px;top:558.60px;font-size:10.5px;color:#333;font-weight:400;font-family:'Liberation Sans',sans-serif;transform:scaleX(0.937);">Type here to search</div>
<svg class="a" style="left:271px;top:557px;" width="13" height="12" viewBox="0 0 13 12"><circle cx="6.3" cy="5.8" r="4.4" fill="none" stroke="#111" stroke-width="1.7"/></svg>
<svg class="a" style="left:303px;top:556px;" width="13" height="13" viewBox="0 0 13 13"><path d="M1.5 2v9M1.5 3.5h6.5v6h-6.5M9.5 2v9" stroke="#111" stroke-width="1.5" fill="none"/><path d="M11.5 4v1M11.5 7v1" stroke="#111" stroke-width="1"/></svg>
<svg class="a" style="left:335px;top:554.6px;" width="16" height="16" viewBox="0 0 16 16"><circle cx="8" cy="8" r="7.2" fill="#db4437"/><path d="M8 8L14.2 4.4A7.2 7.2 0 0 1 8 15.2z" fill="#f4c20d"/><path d="M8 8L8 15.2A7.2 7.2 0 0 1 1.8 4.4z" fill="#0f9d58"/><circle cx="8" cy="8" r="3.4" fill="#fff"/><circle cx="8" cy="8" r="2.6" fill="#4285f4"/></svg>
<svg class="a" style="left:368px;top:554px;" width="17" height="17" viewBox="0 0 17 17"><defs><linearGradient id="eg" x1="0" y1="0" x2="1" y2="1"><stop offset="0" stop-color="#3ec46d"/><stop offset=".5" stop-color="#1c9ad6"/><stop offset="1" stop-color="#0a5fb4"/></linearGradient></defs><circle cx="8.5" cy="8.5" r="7.5" fill="url(#eg)"/><path d="M5 9.5Q5 6 8.5 6Q12 6 12 9H6.5Q7 12 10.5 12.5Q7 14.5 5 11z" fill="#f1e8b2"/></svg>
<svg class="a" style="left:400px;top:554px;" width="17" height="16" viewBox="0 0 17 16"><path d="M1.5 3.5h5l1.5 1.5h7.5v9h-14z" fill="#f2b839"/><rect x="1.5" y="6" width="14" height="8.5" fill="#fcd462"/><path d="M5.5 14.5v-4h6v4" stroke="#2b79c2" stroke-width="2" fill="none"/></svg>
<svg class="a" style="left:434px;top:554px;" width="17" height="17" viewBox="0 0 17 17"><rect x="5" y="1.5" width="11" height="14" fill="#fff" stroke="#41a5ee" stroke-width=".8"/><path d="M9 5h5M9 8h5M9 11h5" stroke="#2b7cd3" stroke-width="1.2"/><rect x="1" y="3.5" width="9" height="10" fill="#185abd"/><path d="M2.5 5.5L3.8 11.5L5.5 7L7 11.5L8.5 5.5" stroke="#fff" stroke-width="1" fill="none"/></svg>
<svg class="a" style="left:468.5px;top:554.6px;" width="16" height="16" viewBox="0 0 16 16"><circle cx="8" cy="8" r="7.2" fill="#db4437"/><path d="M8 8L14.2 4.4A7.2 7.2 0 0 1 8 15.2z" fill="#f4c20d"/><path d="M8 8L8 15.2A7.2 7.2 0 0 1 1.8 4.4z" fill="#0f9d58"/><circle cx="8" cy="8" r="3.4" fill="#fff"/><circle cx="8" cy="8" r="2.6" fill="#4285f4"/><circle cx="11" cy="11" r="4.2" fill="#8a4a5a"/><circle cx="11" cy="10" r="1.6" fill="#c89080"/></svg>
<div class="a" style="left:493px;top:549px;width:32px;height:27px;background:#f8f5e6"></div>
<svg class="a" style="left:501px;top:555px;" width="16" height="15" viewBox="0 0 16 15"><circle cx="8" cy="7.5" r="6" fill="#e94b3c"/><path d="M8 1.5A6 6 0 0 1 14 7.5H8z" fill="#f4a42c"/><path d="M14 7.5A6 6 0 0 1 4 12L8 7.5z" fill="#1fb36b"/><path d="M4 12A6 6 0 0 1 2 7.5H8z" fill="#2b8ae0"/><circle cx="8.5" cy="8" r="3" fill="#2ccf8e"/></svg>
<div class="a" style="left:429.7px;top:574px;width:27.30000000000001px;height:2px;background:#7cb8e8"></div>
<div class="a" style="left:462px;top:574px;width:29px;height:2px;background:#7cb8e8"></div>
<div class="a" style="left:493px;top:574px;width:32px;height:2px;background:#7cb8e8"></div>
<svg class="a" style="left:744px;top:555px;" width="14" height="13" viewBox="0 0 14 13"><path d="M3 7Q1 7 1.3 5Q1.8 3.3 3.5 3.6Q4.5 1 7.5 1.5Q10.5 2 10.8 4.8Q13 5 12.8 7Q12.5 8.5 11 8.5H3.5z" fill="#a8d0f0"/><path d="M4 10l-1 2M7 10l-1 2M10 10l-1 2" stroke="#7ab0e0" stroke-width="1"/></svg>
<div class="t" style="left:764.4px;top:559.00px;font-size:10px;color:#222;font-weight:400;font-family:'Liberation Sans',sans-serif;transform:scaleX(0.933);">77°F  Rain</div>
<svg class="a" style="left:817px;top:557px;" width="10" height="7" viewBox="0 0 10 7"><path d="M1 5.5L5 1.5L9 5.5" stroke="#222" stroke-width="1.1" fill="none"/></svg>
<svg class="a" style="left:832px;top:555px;" width="12" height="12" viewBox="0 0 12 12"><path d="M1 4.5h2.5L6.5 2v8L3.5 7.5H1z" fill="none" stroke="#222" stroke-width="1"/><path d="M8 4Q9 6 8 8M10 3Q11.5 6 10 9" stroke="#555" stroke-width=".8" fill="none"/></svg>
<svg class="a" style="left:849px;top:557px;" width="12" height="9" viewBox="0 0 12 9"><rect x=".5" y="1.5" width="9.5" height="6" fill="#111"/><rect x="10" y="3.5" width="1.5" height="2" fill="#111"/><path d="M1 1.5L3 .2" stroke="#111"/></svg>
<svg class="a" style="left:866px;top:556px;" width="10" height="12" viewBox="0 0 10 12"><rect x="1" y="2" width="7" height="6" fill="none" stroke="#222" stroke-width="1.1"/><path d="M3 10h4M5 8v2M1 .8h7" stroke="#222" stroke-width="1"/></svg>
<svg class="a" style="left:882px;top:557px;" width="10" height="9" viewBox="0 0 10 9"><path d="M1 8Q1 1.5 9 1M3 8Q3 3.5 9 3M5 8Q5 5.5 9 5M7 8h.8" stroke="#333" stroke-width=".9" fill="none"/></svg>
<svg class="a" style="left:899px;top:555px;" width="12" height="13" viewBox="0 0 12 13"><path d="M2 11L4.5 8.5L9 3L11 1.5L10 4L5.5 9.5L3 11.5z" fill="none" stroke="#222" stroke-width="1.1"/><circle cx="3" cy="10" r="1.6" fill="none" stroke="#222"/></svg>
<div class="t" style="left:922.3px;top:560.00px;font-size:8.5px;color:#222;font-weight:400;font-family:'Liberation Sans',sans-serif;transform:scaleX(0.803);">VIE</div>
<div class="t" style="left:948.7px;top:553.70px;font-size:8px;color:#222;font-weight:400;font-family:'Liberation Sans',sans-serif;transform:scaleX(0.926);">10:55 AM</div>
<div class="t" style="left:945px;top:566.00px;font-size:8.2px;color:#222;font-weight:400;font-family:'Liberation Sans',sans-serif;transform:scaleX(0.947);">10/10/2021</div>
<svg class="a" style="left:996px;top:556px;" width="12" height="12" viewBox="0 0 12 12"><path d="M1 1h10v8H5l-2 2V9H1z" fill="#111"/><path d="M3 3.5h6M3 5.5h6" stroke="#f1e8b2" stroke-width=".8"/><circle cx="9" cy="9.5" r="2" fill="#111" stroke="#f1e8b2" stroke-width=".6"/></svg>
</body></html>
